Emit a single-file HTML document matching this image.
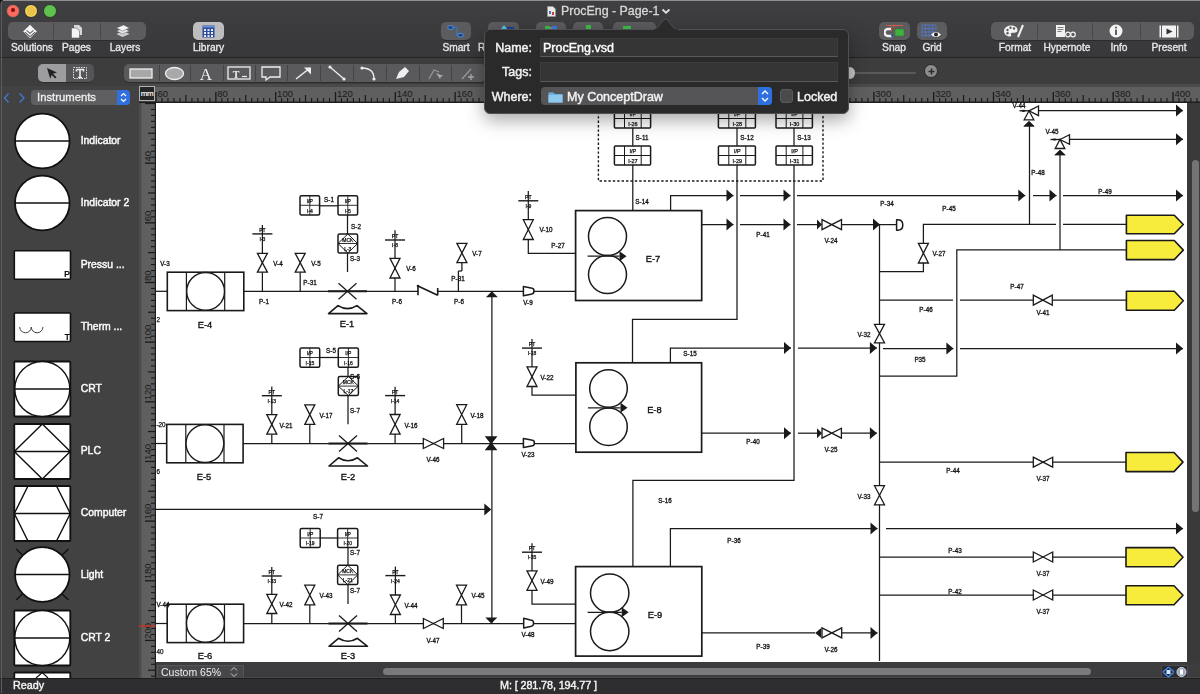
<!DOCTYPE html>
<html><head><meta charset="utf-8">
<style>
*{margin:0;padding:0;box-sizing:border-box}
html,body{width:1200px;height:694px;overflow:hidden;background:#3b3b3d;font-family:"Liberation Sans",sans-serif}
.a{position:absolute}
#top,#row2,#left,#status,#bottombar,.pop,.lib{will-change:transform}
#top{left:0;top:0;width:1200px;height:57px;background:linear-gradient(#3f3f41,#38383a);border-top:1px solid #8e8e90}
#row2{left:0;top:57px;width:1200px;height:29px;background:#3d3d3e;border-top:1px solid #232323}
.tl{width:12px;height:12px;border-radius:50%}
.grp{background:#5c5c5e;border-radius:5px;box-shadow:0 1px 0 rgba(0,0,0,.25)}
.lbl{color:#e6e6e6;font-size:10.2px;text-align:center;-webkit-text-stroke:0.35px #e6e6e6}
.sep{background:#48484a;width:1px}
#left{left:0;top:86px;width:139px;height:592px;background:#424242}
#rulerTop{left:139px;top:86px;width:1061px;height:17px;background:#5b5b5b}
#rulerLeft{left:139px;top:103px;width:17px;height:559px;background:#5b5b5b}
#canvas{left:156px;top:103px;width:1031px;height:559px;background:#fff}
#rightbar{left:1187px;top:103px;width:13px;height:559px;background:#3a3a3a}
#bottombar{left:156px;top:662px;width:1044px;height:16px;background:#3c3c3e}
#status{left:0;top:678px;width:1200px;height:16px;background:#2e2e30;border-top:1px solid #1e1e1e;color:#f4f4f4;font-size:10.8px;-webkit-text-stroke:0.4px #f4f4f4}
.pop{left:484px;top:29px;width:364.5px;height:85px;background:#2a2a2b;border-radius:6px;border:1px solid #505052;box-shadow:0 6px 18px rgba(0,0,0,.35)}
.field{background:#353536;border:1px solid #3c3c3d;border-bottom-color:#5a5a5a}
.plbl{color:#f2f2f2;font-size:12.5px;text-align:right;width:50px;-webkit-text-stroke:0.45px #f2f2f2}
.pop div{-webkit-text-stroke:0.45px currentColor}
</style></head><body>
<div id="top" class="a">
  <div class="a tl" style="left:6px;top:2.7px;width:14px;height:14px;background:#fc6a5e;border:1.5px solid #2e4848"><div class="a" style="left:3.5px;top:3.5px;width:4px;height:4px;border-radius:50%;background:#7a0e08"></div></div>
  <div class="a tl" style="left:24px;top:2.7px;width:14px;height:14px;background:#e8c24a;border:1.5px solid #232a48;box-shadow:inset 0 0 0 1.2px #fcd84a"></div>
  <div class="a tl" style="left:43px;top:2.7px;width:14px;height:14px;background:#5fc24f;border:1.5px solid #2a3a2a"></div>
  <!-- title -->
  <svg class="a" style="left:547px;top:5px" width="9" height="11"><path d="M0.5 0.5h5.5l2.5 2.5v7.5h-8z" fill="#e8e8e8" stroke="#999" stroke-width="0.6"/><rect x="2" y="5" width="2" height="3" fill="#3b6fd0"/><rect x="5" y="6" width="2" height="3" fill="#d04030"/></svg>
  <div class="a" style="left:561px;top:2.5px;font-size:12.4px;color:#d8d8d8;white-space:nowrap;-webkit-text-stroke:0.3px #d8d8d8">ProcEng - Page-1</div>
  <svg class="a" style="left:661px;top:6px" width="10" height="8"><path d="M1.5 2.5l3.5 3.2 3.5-3.2" fill="none" stroke="#e0e0e0" stroke-width="1.8"/></svg>
  <!-- left group -->
  <div class="a grp" style="left:8px;top:21px;width:138px;height:18px"></div>
  <div class="a sep" style="left:53px;top:22px;height:16px"></div>
  <div class="a sep" style="left:100px;top:22px;height:16px"></div>
  <svg class="a" style="left:22px;top:23px" width="16" height="15"><path d="M8 0.8l6.8 6.7-6.8 6.7-6.8-6.7z" fill="#f6f6f6"/><path d="M2.8 8.2l5.2 4.4 5.2-4.4M4.6 6.3l3.4 3 3.4-3" fill="none" stroke="#5e5e60" stroke-width="1.1"/></svg>
  <svg class="a" style="left:70px;top:23px" width="14" height="15"><path d="M4 1h5l3 3v7h-8z" fill="#d8d8d8"/><path d="M1.5 4h5l3 3v7h-8z" fill="#f4f4f4" stroke="#5c5c5e" stroke-width="0.6"/></svg>
  <svg class="a" style="left:115px;top:23px" width="16" height="15"><path d="M1.5 10l7-3 6 3-7 3z" fill="#d0d0d0"/><path d="M1.5 7l7-3 6 3-7 3z" fill="#e6e6e6" stroke="#5c5c5e" stroke-width="0.5"/><path d="M1.5 4l7-3 6 3-7 3z" fill="#f6f6f6" stroke="#5c5c5e" stroke-width="0.5"/></svg>
  <div class="a lbl" style="left:5px;top:41px;width:54px">Solutions</div>
  <div class="a lbl" style="left:53px;top:41px;width:47px">Pages</div>
  <div class="a lbl" style="left:100px;top:41px;width:50px">Layers</div>
  <!-- library -->
  <div class="a grp" style="left:193px;top:21px;width:31px;height:18px;background:#bdbdbf"></div>
  <svg class="a" style="left:202px;top:24px" width="13" height="13"><rect x="0.5" y="0.5" width="12" height="12" fill="#2a4c9a"/><rect x="0.5" y="0.5" width="12" height="2" fill="#6f8fd0"/><g fill="#e8ecf6"><rect x="2" y="4" width="2" height="2"/><rect x="5.5" y="4" width="2" height="2"/><rect x="9" y="4" width="2" height="2"/><rect x="2" y="7" width="2" height="2"/><rect x="5.5" y="7" width="2" height="2"/><rect x="9" y="7" width="2" height="2"/><rect x="2" y="10" width="2" height="2"/><rect x="5.5" y="10" width="2" height="2"/><rect x="9" y="10" width="2" height="2"/></g></svg>
  <div class="a lbl" style="left:183px;top:41px;width:51px">Library</div>
  <!-- smart etc -->
  <div class="a grp" style="left:441px;top:21px;width:30px;height:18px"></div>
  <svg class="a" style="left:447px;top:24px" width="18" height="13"><path d="M5 2.5h5v8h4" fill="none" stroke="#2f7ad8" stroke-width="1"/><rect x="1" y="0.8" width="5" height="3.5" rx="1" fill="#1e3f7a" stroke="#4aa0ff" stroke-width="0.8"/><rect x="11" y="8.5" width="5" height="3.5" rx="1" fill="#1e3f7a" stroke="#4aa0ff" stroke-width="0.8"/></svg>
  <div class="a lbl" style="left:431px;top:41px;width:50px">Smart</div>
  <div class="a lbl" style="left:478px;top:41px;width:12px;text-align:left">R</div>
  <div class="a grp" style="left:488px;top:21px;width:31px;height:18px"></div>
  <div class="a grp" style="left:536px;top:21px;width:30px;height:18px"></div>
  <div class="a grp" style="left:573px;top:21px;width:30px;height:18px"></div>
  <div class="a grp" style="left:613px;top:21px;width:43px;height:18px"></div>
  <svg class="a" style="left:488px;top:21px" width="170" height="9">
    <path d="M13 7l3-4 3 4z" fill="#4fc8e8"/><rect x="19" y="5" width="7" height="3" fill="#1e3f9a"/>
    <rect x="57" y="4" width="5" height="4" rx="1" fill="#3cc04a"/><rect x="64" y="4" width="5" height="4" rx="1" fill="#3a7ee8"/><path d="M62 6h2" stroke="#ccc" stroke-width="0.8"/>
    <rect x="98" y="3" width="5" height="5" rx="1" fill="#3cc04a"/>
    <rect x="135" y="4" width="8" height="4" rx="1" fill="#3cc04a"/>
  </svg>
  <!-- snap grid -->
  <div class="a grp" style="left:879px;top:21px;width:31px;height:18px"></div>
  <svg class="a" style="left:884px;top:23px" width="22" height="14"><path d="M2 1.5h17" stroke="#e06040" stroke-width="0.8"/><path d="M10 0.5v3" stroke="#e06040" stroke-width="0.8"/><path d="M8 5h-4a3 3 0 0 0 0 7h4" fill="none" stroke="#f0f0f0" stroke-width="2.5"/><rect x="7" y="4" width="2" height="2" fill="#d03030"/><rect x="7" y="10.5" width="2" height="2" fill="#3050d0"/><rect x="11" y="5" width="9" height="7" fill="#40b040" stroke="#2a7a2a" stroke-width="0.6"/></svg>
  <div class="a lbl" style="left:869px;top:41px;width:50px">Snap</div>
  <div class="a grp" style="left:917px;top:21px;width:30px;height:18px"></div>
  <svg class="a" style="left:921px;top:23px" width="22" height="15"><g stroke="#4f76c8" stroke-width="0.9" fill="none"><path d="M1 1h14M1 4.5h14M1 8h14M1 11.5h10M1 1v12M4.5 1v12M8 1v12M11.5 1v12M15 1v5"/></g><path d="M10 10.5q5-5 10 0q-5 5-10 0z" fill="#fff"/><circle cx="15" cy="10.5" r="2" fill="#222"/></svg>
  <div class="a lbl" style="left:907px;top:41px;width:50px">Grid</div>
  <!-- right group -->
  <div class="a grp" style="left:991px;top:21px;width:203px;height:18px"></div>
  <div class="a sep" style="left:1037px;top:22px;height:16px"></div>
  <div class="a sep" style="left:1092px;top:22px;height:16px"></div>
  <div class="a sep" style="left:1140px;top:22px;height:16px"></div>
  <svg class="a" style="left:1003px;top:23px" width="22" height="14"><path d="M8 1.5c-4 0-7 2.5-7 5.5 0 3 2.5 5.5 6 5.5 1.5 0 1.5-1.2 1-2-.6-1 .2-1.8 1.2-1.8h2c2 0 3.3-1 3.3-2.8 0-2.8-2.8-4.4-6.5-4.4z" fill="#f2f2f2"/><circle cx="4.5" cy="6" r="1.2" fill="#5c5c5e"/><circle cx="7.5" cy="3.8" r="1.2" fill="#5c5c5e"/><circle cx="11" cy="4.5" r="1.2" fill="#5c5c5e"/><circle cx="4.5" cy="9.3" r="1.2" fill="#5c5c5e"/><path d="M15 13l5-12" stroke="#f2f2f2" stroke-width="2"/></svg>
  <div class="a lbl" style="left:990px;top:41px;width:50px">Format</div>
  <svg class="a" style="left:1055px;top:23px" width="22" height="14"><path d="M1 1h9v12h-9z" fill="#f2f2f2"/><path d="M2.5 3.5h6M2.5 5.5h6M2.5 7.5h4" stroke="#5c5c5e" stroke-width="0.8"/><circle cx="13" cy="10.5" r="2.3" fill="none" stroke="#f2f2f2" stroke-width="1.2"/><circle cx="18" cy="10.5" r="2.3" fill="none" stroke="#f2f2f2" stroke-width="1.2"/></svg>
  <div class="a lbl" style="left:1037px;top:41px;width:60px">Hypernote</div>
  <svg class="a" style="left:1109px;top:23px" width="14" height="14"><circle cx="7" cy="7" r="6.5" fill="#f4f4f4"/><rect x="6" y="5.5" width="2" height="5.5" fill="#5c5c5e"/><circle cx="7" cy="3.5" r="1.1" fill="#5c5c5e"/></svg>
  <div class="a lbl" style="left:1094px;top:41px;width:50px">Info</div>
  <svg class="a" style="left:1159px;top:24px" width="20" height="13"><rect x="0.5" y="0.5" width="19" height="12" fill="#f2f2f2"/><path d="M2.5 0v13M17.5 0v13" stroke="#5c5c5e" stroke-width="1"/><path d="M7.5 3.5l6 3-6 3z" fill="#333"/></svg>
  <div class="a lbl" style="left:1144px;top:41px;width:50px">Present</div>
</div>
<div class="a" style="left:1px;top:1px;width:1px;height:692px;background:#5c5c5e;z-index:5"></div>
<div class="a" style="left:0;top:0;width:4px;height:4px;background:radial-gradient(circle at 4px 4px,transparent 3.5px,#111 4px);z-index:6"></div>
<div id="row2" class="a">
  <div class="a grp" style="left:38px;top:6px;width:56px;height:18px;background:#555557"></div>
  <div class="a" style="left:38px;top:6px;width:28px;height:18px;background:#9d9d9f;border-radius:5px 0 0 5px"></div>
  <svg class="a" style="left:45px;top:9px" width="14" height="12"><path d="M2 1l10 4.5-4 1.2 3.5 3.5-1.3 1.3-3.5-3.5-1.5 3.8z" fill="#222"/></svg>
  <svg class="a" style="left:72px;top:8px" width="16" height="14"><rect x="1.5" y="1.5" width="13" height="11" fill="none" stroke="#ddd" stroke-width="1" stroke-dasharray="1.5 1"/><path d="M4.5 3.5h7v2M8 3.5v8M6 11.5h4M4.5 3.5v2" fill="none" stroke="#eee" stroke-width="1.6"/></svg>
  <div class="a grp" style="left:124px;top:6px;width:362px;height:18px;background:#5a5a5c"></div>
  <div class="a sep" style="left:159px;top:7px;height:16px;background:#444"></div>
  <div class="a sep" style="left:190px;top:7px;height:16px;background:#444"></div>
  <div class="a sep" style="left:223px;top:7px;height:16px;background:#444"></div>
  <div class="a sep" style="left:255px;top:7px;height:16px;background:#444"></div>
  <div class="a sep" style="left:287px;top:7px;height:16px;background:#444"></div>
  <div class="a sep" style="left:320px;top:7px;height:16px;background:#444"></div>
  <div class="a sep" style="left:353px;top:7px;height:16px;background:#444"></div>
  <div class="a sep" style="left:386px;top:7px;height:16px;background:#444"></div>
  <div class="a sep" style="left:419px;top:7px;height:16px;background:#444"></div>
  <div class="a sep" style="left:451px;top:7px;height:16px;background:#444"></div>
  <svg class="a" style="left:124px;top:6px" width="362" height="18">
    <rect x="6" y="5" width="22" height="9" fill="#a8a8a8" stroke="#eee" stroke-width="1.3"/>
    <ellipse cx="50.5" cy="9.5" rx="9" ry="6" fill="#a8a8a8" stroke="#eee" stroke-width="1.3"/>
    <text x="82" y="15.5" font-family="Liberation Serif" font-size="17" fill="#f0f0f0" text-anchor="middle">A</text>
    <rect x="104" y="3" width="22" height="12" fill="none" stroke="#eee" stroke-width="1.3"/>
    <text x="112" y="13.5" font-family="Liberation Serif" font-weight="bold" font-size="10" fill="#f0f0f0" text-anchor="middle">T</text>
    <path d="M118 12.5h5" stroke="#eee" stroke-width="1.2"/>
    <path d="M138 3h18v10h-10l-4 3v-3h-4z" fill="none" stroke="#eee" stroke-width="1.3"/>
    <path d="M172 15l14-11" stroke="#eee" stroke-width="1.5"/><path d="M180 3.5h7v7z" fill="#eee"/>
    <path d="M206 3l14 12" stroke="#eee" stroke-width="1.3"/><circle cx="206" cy="3" r="1.6" fill="#eee"/><circle cx="220" cy="15" r="1.6" fill="#eee"/>
    <path d="M238 4q12 0 12 11" fill="none" stroke="#eee" stroke-width="1.3"/><circle cx="238" cy="4" r="1.6" fill="#eee"/><circle cx="250" cy="15" r="1.6" fill="#eee"/>
    <path d="M272 15l3-7 6-5 4 4-5 6z" fill="#eee"/>
    <path d="M305 15l5-9 5 2" fill="none" stroke="#999" stroke-width="1.2"/><path d="M312 9l4 6 1-2.5 2.5-.5z" fill="#aaa"/>
    <path d="M338 15l9-10" stroke="#999" stroke-width="1.2"/><path d="M347 10v6M344 13h6" stroke="#aaa" stroke-width="1.3"/>
  </svg>
  <!-- slider -->
  <div class="a" style="left:850px;top:14px;width:66px;height:2px;background:#5a5a5a;border-radius:1px"></div>
  <div class="a" style="left:845px;top:9px;width:10px;height:12px;border-radius:50%;background:#c8c8c8"></div>
  <div class="a" style="left:924px;top:6px;width:14px;height:14px;border-radius:50%;background:#8c8c8c;border:1px solid #2a2a2a"></div>
  <svg class="a" style="left:924.5px;top:6.5px" width="13" height="13"><path d="M6.5 3.5v6M3.5 6.5h6" stroke="#2a2a2a" stroke-width="1.5"/></svg>
</div>
<div id="left" class="a"><div class="a" style="left:1px;top:0;width:1px;height:592px;background:#4e4e50"></div>
  <svg class="a" style="left:2px;top:6px" width="26" height="12"><path d="M6.5 1.5l-4 4.5 4 4.5M17.5 1.5l4.5 4.5-4.5 4.5" fill="none" stroke="#3e7bd4" stroke-width="1.3"/></svg>
  <div class="a" style="left:31px;top:4px;width:99px;height:15px;background:#5f5f61;border-radius:4px"></div>
  <div class="a" style="left:37px;top:4px;font-size:11.3px;color:#f0f0f0;line-height:15px;-webkit-text-stroke:0.3px #f0f0f0">Instruments</div>
  <div class="a" style="left:117px;top:4px;width:13px;height:15px;background:#2f6fe0;border-radius:0 4px 4px 0"></div>
  <svg class="a" style="left:117px;top:4px" width="13" height="15"><path d="M4 6l2.5-2.5 2.5 2.5M4 9l2.5 2.5 2.5-2.5" fill="none" stroke="#fff" stroke-width="1.2"/></svg>
</div>
<!--LIB-->
<svg class="a lib" style="left:0;top:0" width="139" height="678" font-family="Liberation Sans"><circle cx="42.3" cy="141" r="27.3" fill="#fff" stroke="#111" stroke-width="1.8"/>
<path d="M14.999999999999996,141 H69.6" stroke="#111" stroke-width="1.6"/>
<text x="80.7" y="144" font-size="10.4" fill="#fafafa" stroke="#fafafa" stroke-width="0.45">Indicator</text>
<circle cx="42.3" cy="203" r="27.3" fill="#fff" stroke="#111" stroke-width="1.8"/>
<path d="M14.999999999999996,203 H69.6" stroke="#111" stroke-width="1.6"/>
<text x="80.7" y="206" font-size="10.4" fill="#fafafa" stroke="#fafafa" stroke-width="0.45">Indicator 2</text>
<rect x="14.3" y="250.8" width="56.2" height="28.5" fill="#fff" stroke="#111" stroke-width="1.6" rx="1"/>
<text x="64" y="277" font-size="9" font-weight="bold" fill="#111">P</text>
<text x="80.7" y="268" font-size="10.4" fill="#fafafa" stroke="#fafafa" stroke-width="0.45">Pressu ...</text>
<rect x="14.3" y="313" width="56.2" height="28.5" fill="#fff" stroke="#111" stroke-width="1.6" rx="1"/>
<text x="64.5" y="339.5" font-size="9" font-weight="bold" fill="#111">T</text>
<text x="80.7" y="330" font-size="10.4" fill="#fafafa" stroke="#fafafa" stroke-width="0.45">Therm ...</text>
<path d="M19.7,327 A5.8,5.8 0 0 0 31.3,327 A5.8,5.8 0 0 0 42.9,327" fill="none" stroke="#444" stroke-width="1"/>
<rect x="14.3" y="361.5" width="56" height="55" fill="#fff" stroke="#111" stroke-width="1.8" rx="1"/>
<circle cx="42.3" cy="389" r="27.5" fill="#fff" stroke="#111" stroke-width="1.4"/>
<path d="M14.3,389 H70.3" stroke="#111" stroke-width="1.4"/>
<text x="80.7" y="392" font-size="10.4" fill="#fafafa" stroke="#fafafa" stroke-width="0.45">CRT</text>
<rect x="14.3" y="424" width="56" height="55" fill="#fff" stroke="#111" stroke-width="1.8" rx="1"/>
<path d="M42.3,424 L70.3,451.5 L42.3,479 L14.3,451.5 Z M14.3,451.5 H70.3" fill="none" stroke="#111" stroke-width="1.4"/>
<text x="80.7" y="454" font-size="10.4" fill="#fafafa" stroke="#fafafa" stroke-width="0.45">PLC</text>
<rect x="14.3" y="486" width="56" height="55" fill="#fff" stroke="#111" stroke-width="1.8" rx="1"/>
<path d="M28,486 L56.5,486 L70.3,513.5 L56.5,541 L28,541 L14.3,513.5 Z M14.3,513.5 H70.3" fill="none" stroke="#111" stroke-width="1.4"/>
<text x="80.7" y="516" font-size="10.4" fill="#fafafa" stroke="#fafafa" stroke-width="0.45">Computer</text>
<circle cx="42.3" cy="574.5" r="27.3" fill="#fff" stroke="#111" stroke-width="1.8"/>
<path d="M14.999999999999996,574.5 H69.6" stroke="#111" stroke-width="1.4"/>
<path d="M16,549 L22.5,555 M68.5,549 L62,555 M16,600 L22.5,594 M68.5,600 L62,594" stroke="#111" stroke-width="1.4"/>
<text x="80.7" y="577.5" font-size="10.4" fill="#fafafa" stroke="#fafafa" stroke-width="0.45">Light</text>
<rect x="14.3" y="610.5" width="56" height="55" fill="#fff" stroke="#111" stroke-width="1.8" rx="1"/>
<circle cx="42.3" cy="638" r="27.5" fill="#fff" stroke="#111" stroke-width="1.4"/>
<path d="M14.3,638 H70.3" stroke="#111" stroke-width="1.4"/>
<text x="80.7" y="641" font-size="10.4" fill="#fafafa" stroke="#fafafa" stroke-width="0.45">CRT 2</text>
<rect x="14.3" y="672.5" width="56" height="20" fill="#fff" stroke="#111" stroke-width="1.8" rx="1"/>
<path d="M36,678 L42.3,672.5 L48,678" fill="none" stroke="#111" stroke-width="1.2"/></svg>
<!--/LIB-->
<!--RULER-->
<svg class="a" style="left:0;top:84px" width="1200" height="19">
<rect x="139" y="0" width="1061" height="19" fill="#5f5f5f"/>
<rect x="139" y="0" width="1061" height="3" fill="#4a4a4a"/>
<rect x="139" y="17.5" width="1061" height="1.5" fill="#1e1e1e"/>
<rect x="155.38" y="8" width="1.3" height="10" fill="#1a1a1a"/>
<text x="157.48" y="12.8" font-size="9.5" fill="#1a1a1a" font-family="Liberation Sans">60</text>
<rect x="161.46" y="14" width="1.1" height="4" fill="#1a1a1a"/>
<rect x="167.44" y="14" width="1.1" height="4" fill="#1a1a1a"/>
<rect x="173.43" y="14" width="1.1" height="4" fill="#1a1a1a"/>
<rect x="179.41" y="14" width="1.1" height="4" fill="#1a1a1a"/>
<rect x="185.29" y="11" width="1.2" height="7" fill="#1a1a1a"/>
<rect x="191.37" y="14" width="1.1" height="4" fill="#1a1a1a"/>
<rect x="197.35" y="14" width="1.1" height="4" fill="#1a1a1a"/>
<rect x="203.34" y="14" width="1.1" height="4" fill="#1a1a1a"/>
<rect x="209.32" y="14" width="1.1" height="4" fill="#1a1a1a"/>
<rect x="215.20" y="8" width="1.3" height="10" fill="#1a1a1a"/>
<text x="217.30" y="12.8" font-size="9.5" fill="#1a1a1a" font-family="Liberation Sans">80</text>
<rect x="221.28" y="14" width="1.1" height="4" fill="#1a1a1a"/>
<rect x="227.26" y="14" width="1.1" height="4" fill="#1a1a1a"/>
<rect x="233.25" y="14" width="1.1" height="4" fill="#1a1a1a"/>
<rect x="239.23" y="14" width="1.1" height="4" fill="#1a1a1a"/>
<rect x="245.11" y="11" width="1.2" height="7" fill="#1a1a1a"/>
<rect x="251.19" y="14" width="1.1" height="4" fill="#1a1a1a"/>
<rect x="257.17" y="14" width="1.1" height="4" fill="#1a1a1a"/>
<rect x="263.16" y="14" width="1.1" height="4" fill="#1a1a1a"/>
<rect x="269.14" y="14" width="1.1" height="4" fill="#1a1a1a"/>
<rect x="275.02" y="8" width="1.3" height="10" fill="#1a1a1a"/>
<text x="277.12" y="12.8" font-size="9.5" fill="#1a1a1a" font-family="Liberation Sans">100</text>
<rect x="281.10" y="14" width="1.1" height="4" fill="#1a1a1a"/>
<rect x="287.08" y="14" width="1.1" height="4" fill="#1a1a1a"/>
<rect x="293.07" y="14" width="1.1" height="4" fill="#1a1a1a"/>
<rect x="299.05" y="14" width="1.1" height="4" fill="#1a1a1a"/>
<rect x="304.93" y="11" width="1.2" height="7" fill="#1a1a1a"/>
<rect x="311.01" y="14" width="1.1" height="4" fill="#1a1a1a"/>
<rect x="316.99" y="14" width="1.1" height="4" fill="#1a1a1a"/>
<rect x="322.98" y="14" width="1.1" height="4" fill="#1a1a1a"/>
<rect x="328.96" y="14" width="1.1" height="4" fill="#1a1a1a"/>
<rect x="334.84" y="8" width="1.3" height="10" fill="#1a1a1a"/>
<text x="336.94" y="12.8" font-size="9.5" fill="#1a1a1a" font-family="Liberation Sans">120</text>
<rect x="340.92" y="14" width="1.1" height="4" fill="#1a1a1a"/>
<rect x="346.90" y="14" width="1.1" height="4" fill="#1a1a1a"/>
<rect x="352.89" y="14" width="1.1" height="4" fill="#1a1a1a"/>
<rect x="358.87" y="14" width="1.1" height="4" fill="#1a1a1a"/>
<rect x="364.75" y="11" width="1.2" height="7" fill="#1a1a1a"/>
<rect x="370.83" y="14" width="1.1" height="4" fill="#1a1a1a"/>
<rect x="376.81" y="14" width="1.1" height="4" fill="#1a1a1a"/>
<rect x="382.80" y="14" width="1.1" height="4" fill="#1a1a1a"/>
<rect x="388.78" y="14" width="1.1" height="4" fill="#1a1a1a"/>
<rect x="394.66" y="8" width="1.3" height="10" fill="#1a1a1a"/>
<text x="396.76" y="12.8" font-size="9.5" fill="#1a1a1a" font-family="Liberation Sans">140</text>
<rect x="400.74" y="14" width="1.1" height="4" fill="#1a1a1a"/>
<rect x="406.72" y="14" width="1.1" height="4" fill="#1a1a1a"/>
<rect x="412.71" y="14" width="1.1" height="4" fill="#1a1a1a"/>
<rect x="418.69" y="14" width="1.1" height="4" fill="#1a1a1a"/>
<rect x="424.57" y="11" width="1.2" height="7" fill="#1a1a1a"/>
<rect x="430.65" y="14" width="1.1" height="4" fill="#1a1a1a"/>
<rect x="436.63" y="14" width="1.1" height="4" fill="#1a1a1a"/>
<rect x="442.62" y="14" width="1.1" height="4" fill="#1a1a1a"/>
<rect x="448.60" y="14" width="1.1" height="4" fill="#1a1a1a"/>
<rect x="454.48" y="8" width="1.3" height="10" fill="#1a1a1a"/>
<text x="456.58" y="12.8" font-size="9.5" fill="#1a1a1a" font-family="Liberation Sans">160</text>
<rect x="460.56" y="14" width="1.1" height="4" fill="#1a1a1a"/>
<rect x="466.54" y="14" width="1.1" height="4" fill="#1a1a1a"/>
<rect x="472.53" y="14" width="1.1" height="4" fill="#1a1a1a"/>
<rect x="478.51" y="14" width="1.1" height="4" fill="#1a1a1a"/>
<rect x="484.39" y="11" width="1.2" height="7" fill="#1a1a1a"/>
<rect x="490.47" y="14" width="1.1" height="4" fill="#1a1a1a"/>
<rect x="496.45" y="14" width="1.1" height="4" fill="#1a1a1a"/>
<rect x="502.44" y="14" width="1.1" height="4" fill="#1a1a1a"/>
<rect x="508.42" y="14" width="1.1" height="4" fill="#1a1a1a"/>
<rect x="514.30" y="8" width="1.3" height="10" fill="#1a1a1a"/>
<text x="516.40" y="12.8" font-size="9.5" fill="#1a1a1a" font-family="Liberation Sans">180</text>
<rect x="520.38" y="14" width="1.1" height="4" fill="#1a1a1a"/>
<rect x="526.36" y="14" width="1.1" height="4" fill="#1a1a1a"/>
<rect x="532.35" y="14" width="1.1" height="4" fill="#1a1a1a"/>
<rect x="538.33" y="14" width="1.1" height="4" fill="#1a1a1a"/>
<rect x="544.21" y="11" width="1.2" height="7" fill="#1a1a1a"/>
<rect x="550.29" y="14" width="1.1" height="4" fill="#1a1a1a"/>
<rect x="556.27" y="14" width="1.1" height="4" fill="#1a1a1a"/>
<rect x="562.26" y="14" width="1.1" height="4" fill="#1a1a1a"/>
<rect x="568.24" y="14" width="1.1" height="4" fill="#1a1a1a"/>
<rect x="574.12" y="8" width="1.3" height="10" fill="#1a1a1a"/>
<text x="576.22" y="12.8" font-size="9.5" fill="#1a1a1a" font-family="Liberation Sans">200</text>
<rect x="580.20" y="14" width="1.1" height="4" fill="#1a1a1a"/>
<rect x="586.18" y="14" width="1.1" height="4" fill="#1a1a1a"/>
<rect x="592.17" y="14" width="1.1" height="4" fill="#1a1a1a"/>
<rect x="598.15" y="14" width="1.1" height="4" fill="#1a1a1a"/>
<rect x="604.03" y="11" width="1.2" height="7" fill="#1a1a1a"/>
<rect x="610.11" y="14" width="1.1" height="4" fill="#1a1a1a"/>
<rect x="616.09" y="14" width="1.1" height="4" fill="#1a1a1a"/>
<rect x="622.08" y="14" width="1.1" height="4" fill="#1a1a1a"/>
<rect x="628.06" y="14" width="1.1" height="4" fill="#1a1a1a"/>
<rect x="633.94" y="8" width="1.3" height="10" fill="#1a1a1a"/>
<text x="636.04" y="12.8" font-size="9.5" fill="#1a1a1a" font-family="Liberation Sans">220</text>
<rect x="640.02" y="14" width="1.1" height="4" fill="#1a1a1a"/>
<rect x="646.00" y="14" width="1.1" height="4" fill="#1a1a1a"/>
<rect x="651.99" y="14" width="1.1" height="4" fill="#1a1a1a"/>
<rect x="657.97" y="14" width="1.1" height="4" fill="#1a1a1a"/>
<rect x="663.85" y="11" width="1.2" height="7" fill="#1a1a1a"/>
<rect x="669.93" y="14" width="1.1" height="4" fill="#1a1a1a"/>
<rect x="675.91" y="14" width="1.1" height="4" fill="#1a1a1a"/>
<rect x="681.90" y="14" width="1.1" height="4" fill="#1a1a1a"/>
<rect x="687.88" y="14" width="1.1" height="4" fill="#1a1a1a"/>
<rect x="693.76" y="8" width="1.3" height="10" fill="#1a1a1a"/>
<text x="695.86" y="12.8" font-size="9.5" fill="#1a1a1a" font-family="Liberation Sans">240</text>
<rect x="699.84" y="14" width="1.1" height="4" fill="#1a1a1a"/>
<rect x="705.82" y="14" width="1.1" height="4" fill="#1a1a1a"/>
<rect x="711.81" y="14" width="1.1" height="4" fill="#1a1a1a"/>
<rect x="717.79" y="14" width="1.1" height="4" fill="#1a1a1a"/>
<rect x="723.67" y="11" width="1.2" height="7" fill="#1a1a1a"/>
<rect x="729.75" y="14" width="1.1" height="4" fill="#1a1a1a"/>
<rect x="735.73" y="14" width="1.1" height="4" fill="#1a1a1a"/>
<rect x="741.72" y="14" width="1.1" height="4" fill="#1a1a1a"/>
<rect x="747.70" y="14" width="1.1" height="4" fill="#1a1a1a"/>
<rect x="753.58" y="8" width="1.3" height="10" fill="#1a1a1a"/>
<text x="755.68" y="12.8" font-size="9.5" fill="#1a1a1a" font-family="Liberation Sans">260</text>
<rect x="759.66" y="14" width="1.1" height="4" fill="#1a1a1a"/>
<rect x="765.64" y="14" width="1.1" height="4" fill="#1a1a1a"/>
<rect x="771.63" y="14" width="1.1" height="4" fill="#1a1a1a"/>
<rect x="777.61" y="14" width="1.1" height="4" fill="#1a1a1a"/>
<rect x="783.49" y="11" width="1.2" height="7" fill="#1a1a1a"/>
<rect x="789.57" y="14" width="1.1" height="4" fill="#1a1a1a"/>
<rect x="795.55" y="14" width="1.1" height="4" fill="#1a1a1a"/>
<rect x="801.54" y="14" width="1.1" height="4" fill="#1a1a1a"/>
<rect x="807.52" y="14" width="1.1" height="4" fill="#1a1a1a"/>
<rect x="813.40" y="8" width="1.3" height="10" fill="#1a1a1a"/>
<text x="815.50" y="12.8" font-size="9.5" fill="#1a1a1a" font-family="Liberation Sans">280</text>
<rect x="819.48" y="14" width="1.1" height="4" fill="#1a1a1a"/>
<rect x="825.46" y="14" width="1.1" height="4" fill="#1a1a1a"/>
<rect x="831.45" y="14" width="1.1" height="4" fill="#1a1a1a"/>
<rect x="837.43" y="14" width="1.1" height="4" fill="#1a1a1a"/>
<rect x="843.31" y="11" width="1.2" height="7" fill="#1a1a1a"/>
<rect x="849.39" y="14" width="1.1" height="4" fill="#1a1a1a"/>
<rect x="855.37" y="14" width="1.1" height="4" fill="#1a1a1a"/>
<rect x="861.36" y="14" width="1.1" height="4" fill="#1a1a1a"/>
<rect x="867.34" y="14" width="1.1" height="4" fill="#1a1a1a"/>
<rect x="873.22" y="8" width="1.3" height="10" fill="#1a1a1a"/>
<text x="875.32" y="12.8" font-size="9.5" fill="#1a1a1a" font-family="Liberation Sans">300</text>
<rect x="879.30" y="14" width="1.1" height="4" fill="#1a1a1a"/>
<rect x="885.28" y="14" width="1.1" height="4" fill="#1a1a1a"/>
<rect x="891.27" y="14" width="1.1" height="4" fill="#1a1a1a"/>
<rect x="897.25" y="14" width="1.1" height="4" fill="#1a1a1a"/>
<rect x="903.13" y="11" width="1.2" height="7" fill="#1a1a1a"/>
<rect x="909.21" y="14" width="1.1" height="4" fill="#1a1a1a"/>
<rect x="915.19" y="14" width="1.1" height="4" fill="#1a1a1a"/>
<rect x="921.18" y="14" width="1.1" height="4" fill="#1a1a1a"/>
<rect x="927.16" y="14" width="1.1" height="4" fill="#1a1a1a"/>
<rect x="933.04" y="8" width="1.3" height="10" fill="#1a1a1a"/>
<text x="935.14" y="12.8" font-size="9.5" fill="#1a1a1a" font-family="Liberation Sans">320</text>
<rect x="939.12" y="14" width="1.1" height="4" fill="#1a1a1a"/>
<rect x="945.10" y="14" width="1.1" height="4" fill="#1a1a1a"/>
<rect x="951.09" y="14" width="1.1" height="4" fill="#1a1a1a"/>
<rect x="957.07" y="14" width="1.1" height="4" fill="#1a1a1a"/>
<rect x="962.95" y="11" width="1.2" height="7" fill="#1a1a1a"/>
<rect x="969.03" y="14" width="1.1" height="4" fill="#1a1a1a"/>
<rect x="975.01" y="14" width="1.1" height="4" fill="#1a1a1a"/>
<rect x="981.00" y="14" width="1.1" height="4" fill="#1a1a1a"/>
<rect x="986.98" y="14" width="1.1" height="4" fill="#1a1a1a"/>
<rect x="992.86" y="8" width="1.3" height="10" fill="#1a1a1a"/>
<text x="994.96" y="12.8" font-size="9.5" fill="#1a1a1a" font-family="Liberation Sans">340</text>
<rect x="998.94" y="14" width="1.1" height="4" fill="#1a1a1a"/>
<rect x="1004.92" y="14" width="1.1" height="4" fill="#1a1a1a"/>
<rect x="1010.91" y="14" width="1.1" height="4" fill="#1a1a1a"/>
<rect x="1016.89" y="14" width="1.1" height="4" fill="#1a1a1a"/>
<rect x="1022.77" y="11" width="1.2" height="7" fill="#1a1a1a"/>
<rect x="1028.85" y="14" width="1.1" height="4" fill="#1a1a1a"/>
<rect x="1034.83" y="14" width="1.1" height="4" fill="#1a1a1a"/>
<rect x="1040.82" y="14" width="1.1" height="4" fill="#1a1a1a"/>
<rect x="1046.80" y="14" width="1.1" height="4" fill="#1a1a1a"/>
<rect x="1052.68" y="8" width="1.3" height="10" fill="#1a1a1a"/>
<text x="1054.78" y="12.8" font-size="9.5" fill="#1a1a1a" font-family="Liberation Sans">360</text>
<rect x="1058.76" y="14" width="1.1" height="4" fill="#1a1a1a"/>
<rect x="1064.74" y="14" width="1.1" height="4" fill="#1a1a1a"/>
<rect x="1070.73" y="14" width="1.1" height="4" fill="#1a1a1a"/>
<rect x="1076.71" y="14" width="1.1" height="4" fill="#1a1a1a"/>
<rect x="1082.59" y="11" width="1.2" height="7" fill="#1a1a1a"/>
<rect x="1088.67" y="14" width="1.1" height="4" fill="#1a1a1a"/>
<rect x="1094.65" y="14" width="1.1" height="4" fill="#1a1a1a"/>
<rect x="1100.64" y="14" width="1.1" height="4" fill="#1a1a1a"/>
<rect x="1106.62" y="14" width="1.1" height="4" fill="#1a1a1a"/>
<rect x="1112.50" y="8" width="1.3" height="10" fill="#1a1a1a"/>
<text x="1114.60" y="12.8" font-size="9.5" fill="#1a1a1a" font-family="Liberation Sans">380</text>
<rect x="1118.58" y="14" width="1.1" height="4" fill="#1a1a1a"/>
<rect x="1124.56" y="14" width="1.1" height="4" fill="#1a1a1a"/>
<rect x="1130.55" y="14" width="1.1" height="4" fill="#1a1a1a"/>
<rect x="1136.53" y="14" width="1.1" height="4" fill="#1a1a1a"/>
<rect x="1142.41" y="11" width="1.2" height="7" fill="#1a1a1a"/>
<rect x="1148.49" y="14" width="1.1" height="4" fill="#1a1a1a"/>
<rect x="1154.47" y="14" width="1.1" height="4" fill="#1a1a1a"/>
<rect x="1160.46" y="14" width="1.1" height="4" fill="#1a1a1a"/>
<rect x="1166.44" y="14" width="1.1" height="4" fill="#1a1a1a"/>
<rect x="1172.32" y="8" width="1.3" height="10" fill="#1a1a1a"/>
<text x="1174.42" y="12.8" font-size="9.5" fill="#1a1a1a" font-family="Liberation Sans">400</text>
<rect x="1178.40" y="14" width="1.1" height="4" fill="#1a1a1a"/>
<rect x="1184.38" y="14" width="1.1" height="4" fill="#1a1a1a"/>
<rect x="1190.37" y="14" width="1.1" height="4" fill="#1a1a1a"/>
<rect x="1196.35" y="14" width="1.1" height="4" fill="#1a1a1a"/>
</svg>
<svg class="a" style="left:139px;top:103px" width="17" height="575">
<rect x="0" y="0" width="17" height="575" fill="#5f5f5f"/>
<rect x="0" y="0" width="2.5" height="575" fill="#4c4c4c"/>
<rect x="15.8" y="0" width="1.2" height="575" fill="#1e1e1e"/>
<rect x="6" y="-0.16" width="10" height="1.3" fill="#1a1a1a"/>
<text transform="translate(11.5 -1.06) rotate(-90)" font-size="9.5" fill="#1a1a1a" font-family="Liberation Sans">20</text>
<rect x="12" y="5.91" width="4" height="1.1" fill="#1a1a1a"/>
<rect x="12" y="11.87" width="4" height="1.1" fill="#1a1a1a"/>
<rect x="12" y="17.84" width="4" height="1.1" fill="#1a1a1a"/>
<rect x="12" y="23.80" width="4" height="1.1" fill="#1a1a1a"/>
<rect x="9" y="29.67" width="7" height="1.2" fill="#1a1a1a"/>
<rect x="12" y="35.74" width="4" height="1.1" fill="#1a1a1a"/>
<rect x="12" y="41.70" width="4" height="1.1" fill="#1a1a1a"/>
<rect x="12" y="47.67" width="4" height="1.1" fill="#1a1a1a"/>
<rect x="12" y="53.63" width="4" height="1.1" fill="#1a1a1a"/>
<rect x="6" y="59.50" width="10" height="1.3" fill="#1a1a1a"/>
<text transform="translate(11.5 58.60) rotate(-90)" font-size="9.5" fill="#1a1a1a" font-family="Liberation Sans">40</text>
<rect x="12" y="65.57" width="4" height="1.1" fill="#1a1a1a"/>
<rect x="12" y="71.53" width="4" height="1.1" fill="#1a1a1a"/>
<rect x="12" y="77.50" width="4" height="1.1" fill="#1a1a1a"/>
<rect x="12" y="83.46" width="4" height="1.1" fill="#1a1a1a"/>
<rect x="9" y="89.33" width="7" height="1.2" fill="#1a1a1a"/>
<rect x="12" y="95.40" width="4" height="1.1" fill="#1a1a1a"/>
<rect x="12" y="101.36" width="4" height="1.1" fill="#1a1a1a"/>
<rect x="12" y="107.33" width="4" height="1.1" fill="#1a1a1a"/>
<rect x="12" y="113.29" width="4" height="1.1" fill="#1a1a1a"/>
<rect x="6" y="119.16" width="10" height="1.3" fill="#1a1a1a"/>
<text transform="translate(11.5 118.26) rotate(-90)" font-size="9.5" fill="#1a1a1a" font-family="Liberation Sans">60</text>
<rect x="12" y="125.23" width="4" height="1.1" fill="#1a1a1a"/>
<rect x="12" y="131.19" width="4" height="1.1" fill="#1a1a1a"/>
<rect x="12" y="137.16" width="4" height="1.1" fill="#1a1a1a"/>
<rect x="12" y="143.12" width="4" height="1.1" fill="#1a1a1a"/>
<rect x="9" y="148.99" width="7" height="1.2" fill="#1a1a1a"/>
<rect x="12" y="155.06" width="4" height="1.1" fill="#1a1a1a"/>
<rect x="12" y="161.02" width="4" height="1.1" fill="#1a1a1a"/>
<rect x="12" y="166.99" width="4" height="1.1" fill="#1a1a1a"/>
<rect x="12" y="172.95" width="4" height="1.1" fill="#1a1a1a"/>
<rect x="6" y="178.82" width="10" height="1.3" fill="#1a1a1a"/>
<text transform="translate(11.5 177.92) rotate(-90)" font-size="9.5" fill="#1a1a1a" font-family="Liberation Sans">80</text>
<rect x="12" y="184.89" width="4" height="1.1" fill="#1a1a1a"/>
<rect x="12" y="190.85" width="4" height="1.1" fill="#1a1a1a"/>
<rect x="12" y="196.82" width="4" height="1.1" fill="#1a1a1a"/>
<rect x="12" y="202.78" width="4" height="1.1" fill="#1a1a1a"/>
<rect x="9" y="208.65" width="7" height="1.2" fill="#1a1a1a"/>
<rect x="12" y="214.72" width="4" height="1.1" fill="#1a1a1a"/>
<rect x="12" y="220.68" width="4" height="1.1" fill="#1a1a1a"/>
<rect x="12" y="226.65" width="4" height="1.1" fill="#1a1a1a"/>
<rect x="12" y="232.61" width="4" height="1.1" fill="#1a1a1a"/>
<rect x="6" y="238.48" width="10" height="1.3" fill="#1a1a1a"/>
<text transform="translate(11.5 237.58) rotate(-90)" font-size="9.5" fill="#1a1a1a" font-family="Liberation Sans">100</text>
<rect x="12" y="244.55" width="4" height="1.1" fill="#1a1a1a"/>
<rect x="12" y="250.51" width="4" height="1.1" fill="#1a1a1a"/>
<rect x="12" y="256.48" width="4" height="1.1" fill="#1a1a1a"/>
<rect x="12" y="262.44" width="4" height="1.1" fill="#1a1a1a"/>
<rect x="9" y="268.31" width="7" height="1.2" fill="#1a1a1a"/>
<rect x="12" y="274.38" width="4" height="1.1" fill="#1a1a1a"/>
<rect x="12" y="280.34" width="4" height="1.1" fill="#1a1a1a"/>
<rect x="12" y="286.31" width="4" height="1.1" fill="#1a1a1a"/>
<rect x="12" y="292.27" width="4" height="1.1" fill="#1a1a1a"/>
<rect x="6" y="298.14" width="10" height="1.3" fill="#1a1a1a"/>
<text transform="translate(11.5 297.24) rotate(-90)" font-size="9.5" fill="#1a1a1a" font-family="Liberation Sans">120</text>
<rect x="12" y="304.21" width="4" height="1.1" fill="#1a1a1a"/>
<rect x="12" y="310.17" width="4" height="1.1" fill="#1a1a1a"/>
<rect x="12" y="316.14" width="4" height="1.1" fill="#1a1a1a"/>
<rect x="12" y="322.10" width="4" height="1.1" fill="#1a1a1a"/>
<rect x="9" y="327.97" width="7" height="1.2" fill="#1a1a1a"/>
<rect x="12" y="334.04" width="4" height="1.1" fill="#1a1a1a"/>
<rect x="12" y="340.00" width="4" height="1.1" fill="#1a1a1a"/>
<rect x="12" y="345.97" width="4" height="1.1" fill="#1a1a1a"/>
<rect x="12" y="351.93" width="4" height="1.1" fill="#1a1a1a"/>
<rect x="6" y="357.80" width="10" height="1.3" fill="#1a1a1a"/>
<text transform="translate(11.5 356.90) rotate(-90)" font-size="9.5" fill="#1a1a1a" font-family="Liberation Sans">140</text>
<rect x="12" y="363.87" width="4" height="1.1" fill="#1a1a1a"/>
<rect x="12" y="369.83" width="4" height="1.1" fill="#1a1a1a"/>
<rect x="12" y="375.80" width="4" height="1.1" fill="#1a1a1a"/>
<rect x="12" y="381.76" width="4" height="1.1" fill="#1a1a1a"/>
<rect x="9" y="387.63" width="7" height="1.2" fill="#1a1a1a"/>
<rect x="12" y="393.70" width="4" height="1.1" fill="#1a1a1a"/>
<rect x="12" y="399.66" width="4" height="1.1" fill="#1a1a1a"/>
<rect x="12" y="405.63" width="4" height="1.1" fill="#1a1a1a"/>
<rect x="12" y="411.59" width="4" height="1.1" fill="#1a1a1a"/>
<rect x="6" y="417.46" width="10" height="1.3" fill="#1a1a1a"/>
<text transform="translate(11.5 416.56) rotate(-90)" font-size="9.5" fill="#1a1a1a" font-family="Liberation Sans">160</text>
<rect x="12" y="423.53" width="4" height="1.1" fill="#1a1a1a"/>
<rect x="12" y="429.49" width="4" height="1.1" fill="#1a1a1a"/>
<rect x="12" y="435.46" width="4" height="1.1" fill="#1a1a1a"/>
<rect x="12" y="441.42" width="4" height="1.1" fill="#1a1a1a"/>
<rect x="9" y="447.29" width="7" height="1.2" fill="#1a1a1a"/>
<rect x="12" y="453.36" width="4" height="1.1" fill="#1a1a1a"/>
<rect x="12" y="459.32" width="4" height="1.1" fill="#1a1a1a"/>
<rect x="12" y="465.29" width="4" height="1.1" fill="#1a1a1a"/>
<rect x="12" y="471.25" width="4" height="1.1" fill="#1a1a1a"/>
<rect x="6" y="477.12" width="10" height="1.3" fill="#1a1a1a"/>
<text transform="translate(11.5 476.22) rotate(-90)" font-size="9.5" fill="#1a1a1a" font-family="Liberation Sans">180</text>
<rect x="12" y="483.19" width="4" height="1.1" fill="#1a1a1a"/>
<rect x="12" y="489.15" width="4" height="1.1" fill="#1a1a1a"/>
<rect x="12" y="495.12" width="4" height="1.1" fill="#1a1a1a"/>
<rect x="12" y="501.08" width="4" height="1.1" fill="#1a1a1a"/>
<rect x="9" y="506.95" width="7" height="1.2" fill="#1a1a1a"/>
<rect x="12" y="513.02" width="4" height="1.1" fill="#1a1a1a"/>
<rect x="12" y="518.98" width="4" height="1.1" fill="#1a1a1a"/>
<rect x="12" y="524.95" width="4" height="1.1" fill="#1a1a1a"/>
<rect x="12" y="530.91" width="4" height="1.1" fill="#1a1a1a"/>
<rect x="6" y="536.78" width="10" height="1.3" fill="#1a1a1a"/>
<text transform="translate(11.5 535.88) rotate(-90)" font-size="9.5" fill="#1a1a1a" font-family="Liberation Sans">200</text>
<rect x="12" y="542.85" width="4" height="1.1" fill="#1a1a1a"/>
<rect x="12" y="548.81" width="4" height="1.1" fill="#1a1a1a"/>
<rect x="12" y="554.78" width="4" height="1.1" fill="#1a1a1a"/>
<rect x="12" y="560.74" width="4" height="1.1" fill="#1a1a1a"/>
<rect x="9" y="566.61" width="7" height="1.2" fill="#1a1a1a"/>
<rect x="12" y="572.68" width="4" height="1.1" fill="#1a1a1a"/>
<rect x="0" y="522.3" width="17" height="1.3" fill="#d03020"/>
</svg>
<div class="a" style="left:139px;top:86px;width:16px;height:15px;background:#262626;border:1px solid #b0b0b0;color:#f4f4f4;font-size:8px;line-height:13px;text-align:center;letter-spacing:-0.3px;-webkit-text-stroke:0.2px #fff">mm</div>
<!--/RULER-->
<div id="canvas" class="a"></div>
<!--DIAG-->
<svg class="a" style="left:0;top:0;will-change:transform" width="1200" height="694" font-family="Liberation Sans"><defs><clipPath id="cv"><rect x="156" y="103" width="1031" height="559"/></clipPath></defs><g clip-path="url(#cv)"><path d="M156.0,291.3 L167.3,291.3" fill="none" stroke="#1a1a1a" stroke-width="1.25"/>
<path d="M243.8,291.3 L418.0,291.3" fill="none" stroke="#1a1a1a" stroke-width="1.25"/>
<path d="M437.7,291.3 L523.4,291.3" fill="none" stroke="#1a1a1a" stroke-width="1.25"/>
<path d="M534.0,291.3 L575.6,291.3" fill="none" stroke="#1a1a1a" stroke-width="1.25"/>
<rect x="167.3" y="272.2" width="76.5" height="38.4" rx="0" fill="#fff" stroke="#1a1a1a" stroke-width="1.6"/>
<path d="M186.4,272.2 L186.4,310.6" fill="none" stroke="#1a1a1a" stroke-width="1.2"/>
<path d="M224.7,272.2 L224.7,310.6" fill="none" stroke="#1a1a1a" stroke-width="1.2"/>
<circle cx="205.6" cy="291.4" r="18.9" fill="#fff" stroke="#1a1a1a" stroke-width="1.4"/>
<path d="M262.4,225.0 L262.4,291.3" fill="none" stroke="#1a1a1a" stroke-width="1.25"/>
<path d="M252.4,233.9 L272.4,233.9" fill="none" stroke="#1a1a1a" stroke-width="1.4"/>
<text x="262.4" y="231.9" font-size="5" text-anchor="middle" fill="#111" stroke="#111" stroke-width="0.25">PT</text>
<text x="262.4" y="240.9" font-size="5" text-anchor="middle" fill="#111" stroke="#111" stroke-width="0.25">I-3</text>
<path d="M257.4,253.3 L267.4,253.3 L257.4,272.2 L267.4,272.2 Z" fill="#fff" stroke="#1a1a1a" stroke-width="1.3" stroke-linejoin="miter"/>
<path d="M300.2,272.2 L300.2,291.3" fill="none" stroke="#1a1a1a" stroke-width="1.25"/>
<path d="M295.2,253.3 L305.2,253.3 L295.2,272.2 L305.2,272.2 Z" fill="#fff" stroke="#1a1a1a" stroke-width="1.3" stroke-linejoin="miter"/>
<rect x="300.0" y="195.7" width="19.6" height="19.3" rx="1.5" fill="#fff" stroke="#1a1a1a" stroke-width="1.5"/>
<path d="M309.8,195.7 L309.8,215.0" fill="none" stroke="#1a1a1a" stroke-width="0.9"/>
<path d="M300.0,205.3 L319.6,205.3" fill="none" stroke="#1a1a1a" stroke-width="0.9"/>
<text x="309.8" y="203.2" font-size="5" text-anchor="middle" fill="#111" stroke="#111" stroke-width="0.25">I/P</text>
<text x="309.8" y="212.5" font-size="5" text-anchor="middle" fill="#111" stroke="#111" stroke-width="0.25">I-4</text>
<rect x="338.0" y="195.7" width="19.6" height="19.3" rx="1.5" fill="#fff" stroke="#1a1a1a" stroke-width="1.5"/>
<path d="M347.8,195.7 L347.8,215.0" fill="none" stroke="#1a1a1a" stroke-width="0.9"/>
<path d="M338.0,205.3 L357.6,205.3" fill="none" stroke="#1a1a1a" stroke-width="0.9"/>
<text x="347.8" y="203.2" font-size="5" text-anchor="middle" fill="#111" stroke="#111" stroke-width="0.25">I/P</text>
<text x="347.8" y="212.5" font-size="5" text-anchor="middle" fill="#111" stroke="#111" stroke-width="0.25">I-5</text>
<path d="M319.6,205.8 L338.0,205.8" fill="none" stroke="#1a1a1a" stroke-width="1.25"/>
<path d="M347.5,215.0 L347.5,234.0" fill="none" stroke="#1a1a1a" stroke-width="1.25"/>
<rect x="338.0" y="234.0" width="19.6" height="19.0" rx="1.5" fill="#fff" stroke="#1a1a1a" stroke-width="1.5"/>
<path d="M347.8,234.0 L357.6,243.5 L347.8,253.0 L338.0,243.5 Z" fill="none" stroke="#1a1a1a" stroke-width="1"/>
<path d="M338.0,243.5 L357.6,243.5" fill="none" stroke="#1a1a1a" stroke-width="0.9"/>
<text x="347.8" y="241.5" font-size="5" text-anchor="middle" fill="#111" stroke="#111" stroke-width="0.25">MCK</text>
<text x="347.8" y="250.5" font-size="5" text-anchor="middle" fill="#111" stroke="#111" stroke-width="0.25">L-3</text>
<path d="M347.5,253.0 L347.5,272.0" fill="none" stroke="#1a1a1a" stroke-width="1.25"/>
<path d="M328.0,291.3 L367.0,291.3" fill="none" stroke="#1a1a1a" stroke-width="2.0"/>
<path d="M338.5,283.3 L356.5,299.3" fill="none" stroke="#1a1a1a" stroke-width="1.3"/>
<path d="M338.5,299.3 L356.5,283.3" fill="none" stroke="#1a1a1a" stroke-width="1.3"/>
<path d="M328.5,313.6 L338.0,305.6 Q347.5,311.6 357.0,305.6 L367.0,313.6 Z" fill="#fff" stroke="#1a1a1a" stroke-width="1.6" stroke-linejoin="round"/>
<path d="M395.0,230.3 L395.0,291.3" fill="none" stroke="#1a1a1a" stroke-width="1.25"/>
<path d="M385.0,240.0 L405.0,240.0" fill="none" stroke="#1a1a1a" stroke-width="1.4"/>
<text x="395.0" y="238.0" font-size="5" text-anchor="middle" fill="#111" stroke="#111" stroke-width="0.25">PT</text>
<text x="395.0" y="247.0" font-size="5" text-anchor="middle" fill="#111" stroke="#111" stroke-width="0.25">I-8</text>
<path d="M390.0,258.4 L400.0,258.4 L390.0,278.0 L400.0,278.0 Z" fill="#fff" stroke="#1a1a1a" stroke-width="1.3" stroke-linejoin="miter"/>
<path d="M418.0,286.0 L418.0,295.3" fill="none" stroke="#1a1a1a" stroke-width="1.6"/>
<path d="M418.0,286.0 L437.7,295.3" fill="none" stroke="#1a1a1a" stroke-width="1.6"/>
<path d="M437.7,288.0 L437.7,295.3" fill="none" stroke="#1a1a1a" stroke-width="1.6"/>
<circle cx="418.0" cy="286.0" r="1.3" fill="#1a1a1a"/>
<path d="M461.9,262.6 L461.9,271.0" fill="none" stroke="#1a1a1a" stroke-width="1.25"/>
<path d="M458.4,271.0 L461.9,271.0" fill="none" stroke="#1a1a1a" stroke-width="1.25"/>
<path d="M458.4,271.0 L458.4,291.3" fill="none" stroke="#1a1a1a" stroke-width="1.25"/>
<path d="M456.9,243.4 L466.9,243.4 L456.9,262.6 L466.9,262.6 Z" fill="#fff" stroke="#1a1a1a" stroke-width="1.3" stroke-linejoin="miter"/>
<path d="M491.9,297.0 L491.9,623.5" fill="none" stroke="#1a1a1a" stroke-width="1.25"/>
<path d="M485.9,297.3 L491.9,291.3 L497.9,297.3 Z" fill="#1a1a1a"/>
<path d="M523.4,286.5 L531.0,288.1 Q534.0,288.1 534.0,291.1 Q534.0,294.2 531.0,294.2 L523.4,295.8 Z" fill="#fff" stroke="#1a1a1a" stroke-width="1.5" stroke-linejoin="round"/>
<path d="M528.3,191.0 L528.3,239.5" fill="none" stroke="#1a1a1a" stroke-width="1.25"/>
<path d="M518.3,200.8 L538.3,200.8" fill="none" stroke="#1a1a1a" stroke-width="1.4"/>
<text x="528.3" y="198.8" font-size="5" text-anchor="middle" fill="#111" stroke="#111" stroke-width="0.25">PT</text>
<text x="528.3" y="207.8" font-size="5" text-anchor="middle" fill="#111" stroke="#111" stroke-width="0.25">I-9</text>
<path d="M523.3,219.7 L533.3,219.7 L523.3,239.5 L533.3,239.5 Z" fill="#fff" stroke="#1a1a1a" stroke-width="1.3" stroke-linejoin="miter"/>
<path d="M528.3,239.5 L528.3,253.3 L575.6,253.3" fill="none" stroke="#1a1a1a" stroke-width="1.25"/>
<rect x="575.6" y="210.6" width="126.1" height="89.9" rx="0" fill="#fff" stroke="#1a1a1a" stroke-width="1.7"/>
<circle cx="607.5" cy="236.5" r="19.0" fill="#fff" stroke="#1a1a1a" stroke-width="1.5"/>
<circle cx="607.5" cy="274.6" r="19.0" fill="#fff" stroke="#1a1a1a" stroke-width="1.5"/>
<path d="M587.6,256.2 L619.5,256.2" fill="none" stroke="#1a1a1a" stroke-width="1.2"/>
<path d="M619.5,251.2 L626.5,256.2 L619.5,261.2 Z" fill="#1a1a1a"/>
<rect x="614.4" y="109.0" width="36.2" height="19.0" rx="1" fill="#fff" stroke="#1a1a1a" stroke-width="1.5"/>
<path d="M624.5,109.0 L624.5,128.0" fill="none" stroke="#1a1a1a" stroke-width="1.0"/>
<path d="M641.2,109.0 L641.2,128.0" fill="none" stroke="#1a1a1a" stroke-width="1.0"/>
<path d="M614.4,118.5 L650.6,118.5" fill="none" stroke="#1a1a1a" stroke-width="1.0"/>
<text x="632.9" y="116.3" font-size="5.5" text-anchor="middle" fill="#111" stroke="#111" stroke-width="0.25">I/P</text>
<text x="632.9" y="125.7" font-size="5.5" text-anchor="middle" fill="#111" stroke="#111" stroke-width="0.25">I-26</text>
<path d="M632.8,128.0 L632.8,146.0" fill="none" stroke="#1a1a1a" stroke-width="1.25"/>
<rect x="614.4" y="146.0" width="36.2" height="19.0" rx="1" fill="#fff" stroke="#1a1a1a" stroke-width="1.5"/>
<path d="M624.5,146.0 L624.5,165.0" fill="none" stroke="#1a1a1a" stroke-width="1.0"/>
<path d="M641.2,146.0 L641.2,165.0" fill="none" stroke="#1a1a1a" stroke-width="1.0"/>
<path d="M614.4,155.5 L650.6,155.5" fill="none" stroke="#1a1a1a" stroke-width="1.0"/>
<text x="632.9" y="153.3" font-size="5.5" text-anchor="middle" fill="#111" stroke="#111" stroke-width="0.25">I/P</text>
<text x="632.9" y="162.7" font-size="5.5" text-anchor="middle" fill="#111" stroke="#111" stroke-width="0.25">I-27</text>
<path d="M632.8,165.0 L632.8,210.6" fill="none" stroke="#1a1a1a" stroke-width="1.25"/>
<rect x="718.4" y="109.0" width="37.0" height="19.0" rx="1" fill="#fff" stroke="#1a1a1a" stroke-width="1.5"/>
<path d="M728.8,109.0 L728.8,128.0" fill="none" stroke="#1a1a1a" stroke-width="1.0"/>
<path d="M745.8,109.0 L745.8,128.0" fill="none" stroke="#1a1a1a" stroke-width="1.0"/>
<path d="M718.4,118.5 L755.4,118.5" fill="none" stroke="#1a1a1a" stroke-width="1.0"/>
<text x="737.3" y="116.3" font-size="5.5" text-anchor="middle" fill="#111" stroke="#111" stroke-width="0.25">I/P</text>
<text x="737.3" y="125.7" font-size="5.5" text-anchor="middle" fill="#111" stroke="#111" stroke-width="0.25">I-28</text>
<path d="M737.0,128.0 L737.0,146.0" fill="none" stroke="#1a1a1a" stroke-width="1.25"/>
<rect x="718.4" y="146.0" width="37.0" height="19.0" rx="1" fill="#fff" stroke="#1a1a1a" stroke-width="1.5"/>
<path d="M728.8,146.0 L728.8,165.0" fill="none" stroke="#1a1a1a" stroke-width="1.0"/>
<path d="M745.8,146.0 L745.8,165.0" fill="none" stroke="#1a1a1a" stroke-width="1.0"/>
<path d="M718.4,155.5 L755.4,155.5" fill="none" stroke="#1a1a1a" stroke-width="1.0"/>
<text x="737.3" y="153.3" font-size="5.5" text-anchor="middle" fill="#111" stroke="#111" stroke-width="0.25">I/P</text>
<text x="737.3" y="162.7" font-size="5.5" text-anchor="middle" fill="#111" stroke="#111" stroke-width="0.25">I-29</text>
<rect x="776.0" y="109.0" width="36.4" height="19.0" rx="1" fill="#fff" stroke="#1a1a1a" stroke-width="1.5"/>
<path d="M786.2,109.0 L786.2,128.0" fill="none" stroke="#1a1a1a" stroke-width="1.0"/>
<path d="M802.9,109.0 L802.9,128.0" fill="none" stroke="#1a1a1a" stroke-width="1.0"/>
<path d="M776.0,118.5 L812.4,118.5" fill="none" stroke="#1a1a1a" stroke-width="1.0"/>
<text x="794.6" y="116.3" font-size="5.5" text-anchor="middle" fill="#111" stroke="#111" stroke-width="0.25">I/P</text>
<text x="794.6" y="125.7" font-size="5.5" text-anchor="middle" fill="#111" stroke="#111" stroke-width="0.25">I-30</text>
<path d="M794.0,128.0 L794.0,146.0" fill="none" stroke="#1a1a1a" stroke-width="1.25"/>
<rect x="776.0" y="146.0" width="36.4" height="19.0" rx="1" fill="#fff" stroke="#1a1a1a" stroke-width="1.5"/>
<path d="M786.2,146.0 L786.2,165.0" fill="none" stroke="#1a1a1a" stroke-width="1.0"/>
<path d="M802.9,146.0 L802.9,165.0" fill="none" stroke="#1a1a1a" stroke-width="1.0"/>
<path d="M776.0,155.5 L812.4,155.5" fill="none" stroke="#1a1a1a" stroke-width="1.0"/>
<text x="794.6" y="153.3" font-size="5.5" text-anchor="middle" fill="#111" stroke="#111" stroke-width="0.25">I/P</text>
<text x="794.6" y="162.7" font-size="5.5" text-anchor="middle" fill="#111" stroke="#111" stroke-width="0.25">I-31</text>
<path d="M598.4,103 L598.4,181 L823,181 L823,103" fill="none" stroke="#1a1a1a" stroke-width="1.4" stroke-dasharray="2.4 2"/>
<path d="M670.6,210.6 L670.6,195.6 L733.5,195.6" fill="none" stroke="#1a1a1a" stroke-width="1.25"/>
<path d="M726.5,189.6 L733.5,195.6 L726.5,201.6 Z" fill="#1a1a1a"/>
<path d="M740.0,195.6 L790.5,195.6" fill="none" stroke="#1a1a1a" stroke-width="1.25"/>
<path d="M783.5,189.6 L790.5,195.6 L783.5,201.6 Z" fill="#1a1a1a"/>
<path d="M797.0,195.6 L1025.3,195.6" fill="none" stroke="#1a1a1a" stroke-width="1.25"/>
<path d="M1018.3,189.6 L1025.3,195.6 L1018.3,201.6 Z" fill="#1a1a1a"/>
<path d="M1033.0,195.6 L1056.5,195.6" fill="none" stroke="#1a1a1a" stroke-width="1.25"/>
<path d="M1049.5,189.6 L1056.5,195.6 L1049.5,201.6 Z" fill="#1a1a1a"/>
<path d="M1063.0,195.6 L1183.0,195.6" fill="none" stroke="#1a1a1a" stroke-width="1.25"/>
<path d="M1176.0,189.6 L1183.0,195.6 L1176.0,201.6 Z" fill="#1a1a1a"/>
<path d="M701.7,224.6 L733.5,224.6" fill="none" stroke="#1a1a1a" stroke-width="1.25"/>
<path d="M726.5,218.6 L733.5,224.6 L726.5,230.6 Z" fill="#1a1a1a"/>
<path d="M740.0,224.6 L790.5,224.6" fill="none" stroke="#1a1a1a" stroke-width="1.25"/>
<path d="M783.5,218.6 L790.5,224.6 L783.5,230.6 Z" fill="#1a1a1a"/>
<path d="M797.0,224.6 L817.0,224.6" fill="none" stroke="#1a1a1a" stroke-width="1.25"/>
<path d="M817.0,219.6 L822.0,224.6 L817.0,229.6 Z" fill="#1a1a1a"/>
<path d="M822.0,219.6 L841.5,229.6 L841.5,219.6 L822.0,229.6 Z" fill="#fff" stroke="#1a1a1a" stroke-width="1.3"/>
<path d="M841.5,224.6 L880.0,224.6" fill="none" stroke="#1a1a1a" stroke-width="1.25"/>
<path d="M873.0,218.6 L880.0,224.6 L873.0,230.6 Z" fill="#1a1a1a"/>
<path d="M880.0,224.6 L897.0,224.6" fill="none" stroke="#1a1a1a" stroke-width="1.25"/>
<path d="M896.6,219.8 L897.6,219.8 Q902.8,219.8 902.8,225.0 Q902.8,230.2 897.6,230.2 L896.6,230.2 Z" fill="#fff" stroke="#1a1a1a" stroke-width="1.5" stroke-linejoin="round"/>
<path d="M737.0,165.0 L737.0,319.4 L632.5,319.4 L632.5,362.8" fill="none" stroke="#1a1a1a" stroke-width="1.25"/>
<path d="M794.0,165.0 L794.0,480.4 L632.9,480.4 L632.9,566.6" fill="none" stroke="#1a1a1a" stroke-width="1.25"/>
<path d="M879.5,224.6 L879.5,661.0" fill="none" stroke="#1a1a1a" stroke-width="1.25"/>
<path d="M874.5,324.4 L884.5,324.4 L874.5,342.8 L884.5,342.8 Z" fill="#fff" stroke="#1a1a1a" stroke-width="1.3" stroke-linejoin="miter"/>
<path d="M879.5,271.6 L923.4,271.6 L923.4,224.4 L1056.0,224.4" fill="none" stroke="#1a1a1a" stroke-width="1.25"/>
<path d="M1063.0,224.4 L1126.4,224.4" fill="none" stroke="#1a1a1a" stroke-width="1.25"/>
<path d="M918.4,243.3 L928.4,243.3 L918.4,263.0 L928.4,263.0 Z" fill="#fff" stroke="#1a1a1a" stroke-width="1.3" stroke-linejoin="miter"/>
<path d="M879.5,376.2 L956.8,376.2 L956.8,249.9 L1126.4,249.9" fill="none" stroke="#1a1a1a" stroke-width="1.25"/>
<path d="M879.5,300.2 L953.0,300.2" fill="none" stroke="#1a1a1a" stroke-width="1.25"/>
<path d="M960.0,300.2 L1126.4,300.2" fill="none" stroke="#1a1a1a" stroke-width="1.25"/>
<path d="M1033.3,295.2 L1052.3,305.2 L1052.3,295.2 L1033.3,305.2 Z" fill="#fff" stroke="#1a1a1a" stroke-width="1.3"/>
<path d="M883.0,348.5 L953.4,348.5" fill="none" stroke="#1a1a1a" stroke-width="1.25"/>
<path d="M946.4,342.5 L953.4,348.5 L946.4,354.5 Z" fill="#1a1a1a"/>
<path d="M960.0,348.5 L1183.0,348.5" fill="none" stroke="#1a1a1a" stroke-width="1.25"/>
<path d="M1176.0,342.5 L1183.0,348.5 L1176.0,354.5 Z" fill="#1a1a1a"/>
<path d="M1029.5,126.0 L1029.5,224.4" fill="none" stroke="#1a1a1a" stroke-width="1.25"/>
<path d="M1023.8,126.3 L1034.2,126.3 L1029.0,121.3 Z" fill="#1a1a1a" stroke="#1a1a1a" stroke-width="0.8" stroke-linejoin="round"/>
<path d="M1024.2,119.8 L1033.8,119.8 L1029.0,110.8 Z" fill="#fff" stroke="#1a1a1a" stroke-width="1.3"/>
<path d="M1029.0,110.8 L1038.5,106.0 L1038.5,115.6 Z" fill="#fff" stroke="#1a1a1a" stroke-width="1.3"/>
<path d="M1019.5,110.8 L1029.0,110.8" fill="none" stroke="#1a1a1a" stroke-width="1.3"/>
<ellipse cx="1023.5" cy="110.8" rx="2" ry="1.1" fill="#1a1a1a"/>
<path d="M1038.5,110.6 L1183.0,110.6" fill="none" stroke="#1a1a1a" stroke-width="1.25"/>
<path d="M1176.0,104.6 L1183.0,110.6 L1176.0,116.6 Z" fill="#1a1a1a"/>
<path d="M1060.0,154.5 L1060.0,249.9" fill="none" stroke="#1a1a1a" stroke-width="1.25"/>
<path d="M1054.8,155.0 L1065.2,155.0 L1060.0,150.0 Z" fill="#1a1a1a" stroke="#1a1a1a" stroke-width="0.8" stroke-linejoin="round"/>
<path d="M1055.2,148.5 L1064.8,148.5 L1060.0,139.5 Z" fill="#fff" stroke="#1a1a1a" stroke-width="1.3"/>
<path d="M1060.0,139.5 L1069.5,134.7 L1069.5,144.3 Z" fill="#fff" stroke="#1a1a1a" stroke-width="1.3"/>
<path d="M1050.5,139.5 L1060.0,139.5" fill="none" stroke="#1a1a1a" stroke-width="1.3"/>
<ellipse cx="1054.5" cy="139.5" rx="2" ry="1.1" fill="#1a1a1a"/>
<path d="M1069.5,139.3 L1183.0,139.3" fill="none" stroke="#1a1a1a" stroke-width="1.25"/>
<path d="M1176.0,133.3 L1183.0,139.3 L1176.0,145.3 Z" fill="#1a1a1a"/>
<path d="M1126.4,215.2 L1174.3,215.2 L1183.3,224.5 L1174.3,233.8 L1126.4,233.8 Z" fill="#f7ec3c" stroke="#1a1a1a" stroke-width="1.6" stroke-linejoin="round"/>
<path d="M1126.4,240.5 L1174.3,240.5 L1183.3,250.1 L1174.3,259.6 L1126.4,259.6 Z" fill="#f7ec3c" stroke="#1a1a1a" stroke-width="1.6" stroke-linejoin="round"/>
<path d="M1126.4,291.2 L1174.3,291.2 L1183.3,300.7 L1174.3,310.2 L1126.4,310.2 Z" fill="#f7ec3c" stroke="#1a1a1a" stroke-width="1.6" stroke-linejoin="round"/>
<path d="M156.0,443.5 L166.7,443.5" fill="none" stroke="#1a1a1a" stroke-width="1.25"/>
<path d="M243.1,443.5 L575.9,443.5" fill="none" stroke="#1a1a1a" stroke-width="1.25"/>
<rect x="166.7" y="424.4" width="76.4" height="38.4" rx="0" fill="#fff" stroke="#1a1a1a" stroke-width="1.6"/>
<path d="M185.8,424.4 L185.8,462.8" fill="none" stroke="#1a1a1a" stroke-width="1.2"/>
<path d="M224.0,424.4 L224.0,462.8" fill="none" stroke="#1a1a1a" stroke-width="1.2"/>
<circle cx="204.9" cy="443.6" r="18.9" fill="#fff" stroke="#1a1a1a" stroke-width="1.4"/>
<path d="M271.8,386.5 L271.8,443.5" fill="none" stroke="#1a1a1a" stroke-width="1.25"/>
<path d="M261.8,395.7 L281.8,395.7" fill="none" stroke="#1a1a1a" stroke-width="1.4"/>
<text x="271.8" y="393.7" font-size="5" text-anchor="middle" fill="#111" stroke="#111" stroke-width="0.25">PT</text>
<text x="271.8" y="402.7" font-size="5" text-anchor="middle" fill="#111" stroke="#111" stroke-width="0.25">I-13</text>
<path d="M266.8,414.6 L276.8,414.6 L266.8,434.2 L276.8,434.2 Z" fill="#fff" stroke="#1a1a1a" stroke-width="1.3" stroke-linejoin="miter"/>
<path d="M309.8,424.4 L309.8,443.5" fill="none" stroke="#1a1a1a" stroke-width="1.25"/>
<path d="M304.8,404.8 L314.8,404.8 L304.8,424.4 L314.8,424.4 Z" fill="#fff" stroke="#1a1a1a" stroke-width="1.3" stroke-linejoin="miter"/>
<rect x="300.0" y="347.9" width="19.7" height="19.3" rx="1.5" fill="#fff" stroke="#1a1a1a" stroke-width="1.5"/>
<path d="M309.9,347.9 L309.9,367.2" fill="none" stroke="#1a1a1a" stroke-width="0.9"/>
<path d="M300.0,357.5 L319.7,357.5" fill="none" stroke="#1a1a1a" stroke-width="0.9"/>
<text x="309.9" y="355.3" font-size="5" text-anchor="middle" fill="#111" stroke="#111" stroke-width="0.25">I/P</text>
<text x="309.9" y="364.7" font-size="5" text-anchor="middle" fill="#111" stroke="#111" stroke-width="0.25">I-15</text>
<rect x="338.3" y="347.9" width="20.1" height="19.3" rx="1.5" fill="#fff" stroke="#1a1a1a" stroke-width="1.5"/>
<path d="M348.4,347.9 L348.4,367.2" fill="none" stroke="#1a1a1a" stroke-width="0.9"/>
<path d="M338.3,357.5 L358.4,357.5" fill="none" stroke="#1a1a1a" stroke-width="0.9"/>
<text x="348.4" y="355.3" font-size="5" text-anchor="middle" fill="#111" stroke="#111" stroke-width="0.25">I/P</text>
<text x="348.4" y="364.7" font-size="5" text-anchor="middle" fill="#111" stroke="#111" stroke-width="0.25">I-16</text>
<path d="M319.7,357.5 L338.3,357.5" fill="none" stroke="#1a1a1a" stroke-width="1.25"/>
<path d="M348.0,367.2 L348.0,376.5" fill="none" stroke="#1a1a1a" stroke-width="1.25"/>
<rect x="338.3" y="376.5" width="20.1" height="19.1" rx="1.5" fill="#fff" stroke="#1a1a1a" stroke-width="1.5"/>
<path d="M348.4,376.5 L358.4,386.1 L348.4,395.6 L338.3,386.1 Z" fill="none" stroke="#1a1a1a" stroke-width="1"/>
<path d="M338.3,386.1 L358.4,386.1" fill="none" stroke="#1a1a1a" stroke-width="0.9"/>
<text x="348.4" y="384.1" font-size="5" text-anchor="middle" fill="#111" stroke="#111" stroke-width="0.25">MCK</text>
<text x="348.4" y="393.1" font-size="5" text-anchor="middle" fill="#111" stroke="#111" stroke-width="0.25">L-17</text>
<path d="M348.0,395.6 L348.0,424.3" fill="none" stroke="#1a1a1a" stroke-width="1.25"/>
<path d="M328.5,443.5 L367.5,443.5" fill="none" stroke="#1a1a1a" stroke-width="2.0"/>
<path d="M339.0,435.5 L357.0,451.5" fill="none" stroke="#1a1a1a" stroke-width="1.3"/>
<path d="M339.0,451.5 L357.0,435.5" fill="none" stroke="#1a1a1a" stroke-width="1.3"/>
<path d="M329.0,466.0 L338.5,457.8 Q348.0,463.8 357.5,457.8 L367.5,466.0 Z" fill="#fff" stroke="#1a1a1a" stroke-width="1.6" stroke-linejoin="round"/>
<path d="M395.1,386.8 L395.1,443.5" fill="none" stroke="#1a1a1a" stroke-width="1.25"/>
<path d="M385.1,395.6 L405.1,395.6" fill="none" stroke="#1a1a1a" stroke-width="1.4"/>
<text x="395.1" y="393.6" font-size="5" text-anchor="middle" fill="#111" stroke="#111" stroke-width="0.25">PT</text>
<text x="395.1" y="402.6" font-size="5" text-anchor="middle" fill="#111" stroke="#111" stroke-width="0.25">I-14</text>
<path d="M390.1,414.5 L400.1,414.5 L390.1,434.1 L400.1,434.1 Z" fill="#fff" stroke="#1a1a1a" stroke-width="1.3" stroke-linejoin="miter"/>
<path d="M423.3,438.5 L443.6,448.5 L443.6,438.5 L423.3,448.5 Z" fill="#fff" stroke="#1a1a1a" stroke-width="1.3"/>
<path d="M461.7,424.3 L461.7,443.5" fill="none" stroke="#1a1a1a" stroke-width="1.25"/>
<path d="M456.7,404.7 L466.7,404.7 L456.7,424.3 L466.7,424.3 Z" fill="#fff" stroke="#1a1a1a" stroke-width="1.3" stroke-linejoin="miter"/>
<path d="M486.1,436.9 L496.1,436.9 L486.1,449.5 L496.1,449.5 Z" fill="#1a1a1a" stroke="#1a1a1a" stroke-width="1.3" stroke-linejoin="miter"/>
<path d="M523.4,438.4 L531.4,440.0 Q534.4,440.0 534.4,443.0 Q534.4,446.0 531.4,446.0 L523.4,447.6 Z" fill="#fff" stroke="#1a1a1a" stroke-width="1.5" stroke-linejoin="round"/>
<path d="M532.0,339.0 L532.0,386.5" fill="none" stroke="#1a1a1a" stroke-width="1.25"/>
<path d="M522.0,348.1 L542.0,348.1" fill="none" stroke="#1a1a1a" stroke-width="1.4"/>
<text x="532.0" y="346.1" font-size="5" text-anchor="middle" fill="#111" stroke="#111" stroke-width="0.25">PT</text>
<text x="532.0" y="355.1" font-size="5" text-anchor="middle" fill="#111" stroke="#111" stroke-width="0.25">I-18</text>
<path d="M527.0,366.9 L537.0,366.9 L527.0,386.5 L537.0,386.5 Z" fill="#fff" stroke="#1a1a1a" stroke-width="1.3" stroke-linejoin="miter"/>
<path d="M532.0,386.5 L532.0,395.1 L575.9,395.1" fill="none" stroke="#1a1a1a" stroke-width="1.25"/>
<rect x="575.9" y="362.8" width="125.7" height="89.4" rx="0" fill="#fff" stroke="#1a1a1a" stroke-width="1.7"/>
<circle cx="608.5" cy="388.5" r="18.8" fill="#fff" stroke="#1a1a1a" stroke-width="1.5"/>
<circle cx="608.5" cy="426.8" r="18.8" fill="#fff" stroke="#1a1a1a" stroke-width="1.5"/>
<path d="M587.9,407.8 L620.5,407.8" fill="none" stroke="#1a1a1a" stroke-width="1.2"/>
<path d="M620.5,402.8 L627.5,407.8 L620.5,412.8 Z" fill="#1a1a1a"/>
<path d="M670.4,362.8 L670.4,348.1 L791.0,348.1" fill="none" stroke="#1a1a1a" stroke-width="1.25"/>
<path d="M784.0,342.1 L791.0,348.1 L784.0,354.1 Z" fill="#1a1a1a"/>
<path d="M798.0,348.1 L876.9,348.1" fill="none" stroke="#1a1a1a" stroke-width="1.25"/>
<path d="M869.9,342.1 L876.9,348.1 L869.9,354.1 Z" fill="#1a1a1a"/>
<path d="M701.6,433.2 L791.0,433.2" fill="none" stroke="#1a1a1a" stroke-width="1.25"/>
<path d="M784.0,427.2 L791.0,433.2 L784.0,439.2 Z" fill="#1a1a1a"/>
<path d="M798.0,433.2 L817.0,433.2" fill="none" stroke="#1a1a1a" stroke-width="1.25"/>
<path d="M817.0,428.2 L822.0,433.2 L817.0,438.2 Z" fill="#1a1a1a"/>
<path d="M822.0,428.2 L841.4,438.2 L841.4,428.2 L822.0,438.2 Z" fill="#fff" stroke="#1a1a1a" stroke-width="1.3"/>
<path d="M841.4,433.2 L876.9,433.2" fill="none" stroke="#1a1a1a" stroke-width="1.25"/>
<path d="M869.9,427.2 L876.9,433.2 L869.9,439.2 Z" fill="#1a1a1a"/>
<path d="M879.5,462.2 L1126.0,462.2" fill="none" stroke="#1a1a1a" stroke-width="1.25"/>
<path d="M1033.3,457.2 L1052.7,467.2 L1052.7,457.2 L1033.3,467.2 Z" fill="#fff" stroke="#1a1a1a" stroke-width="1.3"/>
<path d="M1126.0,452.5 L1174.0,452.5 L1183.0,462.1 L1174.0,471.6 L1126.0,471.6 Z" fill="#f7ec3c" stroke="#1a1a1a" stroke-width="1.6" stroke-linejoin="round"/>
<path d="M874.5,485.7 L884.5,485.7 L874.5,504.8 L884.5,504.8 Z" fill="#fff" stroke="#1a1a1a" stroke-width="1.3" stroke-linejoin="miter"/>
<path d="M156.0,509.4 L486.0,509.4" fill="none" stroke="#1a1a1a" stroke-width="1.25"/>
<path d="M484.3,503.4 L491.3,509.4 L484.3,515.4 Z" fill="#1a1a1a"/>
<path d="M156.0,623.5 L167.2,623.5" fill="none" stroke="#1a1a1a" stroke-width="1.25"/>
<path d="M243.6,623.5 L575.6,623.5" fill="none" stroke="#1a1a1a" stroke-width="1.25"/>
<rect x="167.2" y="604.2" width="76.4" height="38.4" rx="0" fill="#fff" stroke="#1a1a1a" stroke-width="1.6"/>
<path d="M186.3,604.2 L186.3,642.6" fill="none" stroke="#1a1a1a" stroke-width="1.2"/>
<path d="M224.5,604.2 L224.5,642.6" fill="none" stroke="#1a1a1a" stroke-width="1.2"/>
<circle cx="205.4" cy="623.4" r="18.9" fill="#fff" stroke="#1a1a1a" stroke-width="1.4"/>
<path d="M271.8,567.0 L271.8,623.5" fill="none" stroke="#1a1a1a" stroke-width="1.25"/>
<path d="M261.8,576.0 L281.8,576.0" fill="none" stroke="#1a1a1a" stroke-width="1.4"/>
<text x="271.8" y="574.0" font-size="5" text-anchor="middle" fill="#111" stroke="#111" stroke-width="0.25">PT</text>
<text x="271.8" y="583.0" font-size="5" text-anchor="middle" fill="#111" stroke="#111" stroke-width="0.25">I-33</text>
<path d="M266.8,594.4 L276.8,594.4 L266.8,613.5 L276.8,613.5 Z" fill="#fff" stroke="#1a1a1a" stroke-width="1.3" stroke-linejoin="miter"/>
<path d="M309.8,604.9 L309.8,623.5" fill="none" stroke="#1a1a1a" stroke-width="1.25"/>
<path d="M304.8,585.2 L314.8,585.2 L304.8,604.9 L314.8,604.9 Z" fill="#fff" stroke="#1a1a1a" stroke-width="1.3" stroke-linejoin="miter"/>
<rect x="300.2" y="528.4" width="20.0" height="19.2" rx="1.5" fill="#fff" stroke="#1a1a1a" stroke-width="1.5"/>
<path d="M310.2,528.4 L310.2,547.6" fill="none" stroke="#1a1a1a" stroke-width="0.9"/>
<path d="M300.2,538.0 L320.2,538.0" fill="none" stroke="#1a1a1a" stroke-width="0.9"/>
<text x="310.2" y="535.8" font-size="5" text-anchor="middle" fill="#111" stroke="#111" stroke-width="0.25">I/P</text>
<text x="310.2" y="545.1" font-size="5" text-anchor="middle" fill="#111" stroke="#111" stroke-width="0.25">I-19</text>
<rect x="337.6" y="528.4" width="20.2" height="19.2" rx="1.5" fill="#fff" stroke="#1a1a1a" stroke-width="1.5"/>
<path d="M347.7,528.4 L347.7,547.6" fill="none" stroke="#1a1a1a" stroke-width="0.9"/>
<path d="M337.6,538.0 L357.8,538.0" fill="none" stroke="#1a1a1a" stroke-width="0.9"/>
<text x="347.7" y="535.8" font-size="5" text-anchor="middle" fill="#111" stroke="#111" stroke-width="0.25">I/P</text>
<text x="347.7" y="545.1" font-size="5" text-anchor="middle" fill="#111" stroke="#111" stroke-width="0.25">I-20</text>
<path d="M320.2,538.0 L337.6,538.0" fill="none" stroke="#1a1a1a" stroke-width="1.25"/>
<path d="M348.0,547.6 L348.0,565.2" fill="none" stroke="#1a1a1a" stroke-width="1.25"/>
<rect x="337.6" y="565.2" width="20.2" height="19.4" rx="1.5" fill="#fff" stroke="#1a1a1a" stroke-width="1.5"/>
<path d="M347.7,565.2 L357.8,574.9 L347.7,584.6 L337.6,574.9 Z" fill="none" stroke="#1a1a1a" stroke-width="1"/>
<path d="M337.6,574.9 L357.8,574.9" fill="none" stroke="#1a1a1a" stroke-width="0.9"/>
<text x="347.7" y="572.9" font-size="5" text-anchor="middle" fill="#111" stroke="#111" stroke-width="0.25">MCK</text>
<text x="347.7" y="582.1" font-size="5" text-anchor="middle" fill="#111" stroke="#111" stroke-width="0.25">L-21</text>
<path d="M348.0,584.6 L348.0,604.0" fill="none" stroke="#1a1a1a" stroke-width="1.25"/>
<path d="M328.5,623.5 L367.5,623.5" fill="none" stroke="#1a1a1a" stroke-width="2.0"/>
<path d="M339.0,615.5 L357.0,631.5" fill="none" stroke="#1a1a1a" stroke-width="1.3"/>
<path d="M339.0,631.5 L357.0,615.5" fill="none" stroke="#1a1a1a" stroke-width="1.3"/>
<path d="M329.0,646.3 L338.5,638.3 Q348.0,644.3 357.5,638.3 L367.5,646.3 Z" fill="#fff" stroke="#1a1a1a" stroke-width="1.6" stroke-linejoin="round"/>
<path d="M395.4,566.5 L395.4,623.5" fill="none" stroke="#1a1a1a" stroke-width="1.25"/>
<path d="M385.4,575.6 L405.4,575.6" fill="none" stroke="#1a1a1a" stroke-width="1.4"/>
<text x="395.4" y="573.6" font-size="5" text-anchor="middle" fill="#111" stroke="#111" stroke-width="0.25">PT</text>
<text x="395.4" y="582.6" font-size="5" text-anchor="middle" fill="#111" stroke="#111" stroke-width="0.25">I-24</text>
<path d="M390.4,595.0 L400.4,595.0 L390.4,614.5 L400.4,614.5 Z" fill="#fff" stroke="#1a1a1a" stroke-width="1.3" stroke-linejoin="miter"/>
<path d="M423.4,618.5 L443.3,628.5 L443.3,618.5 L423.4,628.5 Z" fill="#fff" stroke="#1a1a1a" stroke-width="1.3"/>
<path d="M461.5,604.9 L461.5,623.5" fill="none" stroke="#1a1a1a" stroke-width="1.25"/>
<path d="M456.5,585.2 L466.5,585.2 L456.5,604.9 L466.5,604.9 Z" fill="#fff" stroke="#1a1a1a" stroke-width="1.3" stroke-linejoin="miter"/>
<path d="M485.3,617.5 L491.3,623.5 L497.3,617.5 Z" fill="#1a1a1a"/>
<path d="M523.7,618.3 L530.4,619.9 Q533.6,619.9 533.6,623.1 Q533.6,626.4 530.4,626.4 L523.7,628.0 Z" fill="#fff" stroke="#1a1a1a" stroke-width="1.5" stroke-linejoin="round"/>
<path d="M532.0,543.2 L532.0,590.3" fill="none" stroke="#1a1a1a" stroke-width="1.25"/>
<path d="M522.0,552.2 L542.0,552.2" fill="none" stroke="#1a1a1a" stroke-width="1.4"/>
<text x="532.0" y="550.2" font-size="5" text-anchor="middle" fill="#111" stroke="#111" stroke-width="0.25">PT</text>
<text x="532.0" y="559.2" font-size="5" text-anchor="middle" fill="#111" stroke="#111" stroke-width="0.25">I-35</text>
<path d="M527.0,570.9 L537.0,570.9 L527.0,590.3 L537.0,590.3 Z" fill="#fff" stroke="#1a1a1a" stroke-width="1.3" stroke-linejoin="miter"/>
<path d="M532.0,590.3 L532.0,604.1 L575.6,604.1" fill="none" stroke="#1a1a1a" stroke-width="1.25"/>
<rect x="575.6" y="566.6" width="126.2" height="89.5" rx="0" fill="#fff" stroke="#1a1a1a" stroke-width="1.7"/>
<circle cx="609.7" cy="593.1" r="19.2" fill="#fff" stroke="#1a1a1a" stroke-width="1.5"/>
<circle cx="609.7" cy="631.5" r="19.2" fill="#fff" stroke="#1a1a1a" stroke-width="1.5"/>
<path d="M587.6,612.3 L621.7,612.3" fill="none" stroke="#1a1a1a" stroke-width="1.2"/>
<path d="M621.7,607.3 L628.7,612.3 L621.7,617.3 Z" fill="#1a1a1a"/>
<path d="M670.4,566.6 L670.4,528.5 L877.5,528.5" fill="none" stroke="#1a1a1a" stroke-width="1.25"/>
<path d="M870.5,522.5 L877.5,528.5 L870.5,534.5 Z" fill="#1a1a1a"/>
<path d="M886.0,528.5 L1183.0,528.5" fill="none" stroke="#1a1a1a" stroke-width="1.25"/>
<path d="M1176.0,522.5 L1183.0,528.5 L1176.0,534.5 Z" fill="#1a1a1a"/>
<path d="M701.8,632.9 L815.0,632.9" fill="none" stroke="#1a1a1a" stroke-width="1.25"/>
<path d="M821.2,627.9 L815.2,632.9 L821.2,637.9 Z" fill="#1a1a1a"/>
<path d="M822.0,627.9 L841.7,637.9 L841.7,627.9 L822.0,637.9 Z" fill="#fff" stroke="#1a1a1a" stroke-width="1.3"/>
<path d="M841.7,632.9 L877.5,632.9" fill="none" stroke="#1a1a1a" stroke-width="1.25"/>
<path d="M870.5,626.9 L877.5,632.9 L870.5,638.9 Z" fill="#1a1a1a"/>
<path d="M879.5,557.0 L1126.0,557.0" fill="none" stroke="#1a1a1a" stroke-width="1.25"/>
<path d="M1033.3,552.0 L1052.7,562.0 L1052.7,552.0 L1033.3,562.0 Z" fill="#fff" stroke="#1a1a1a" stroke-width="1.3"/>
<path d="M1126.0,547.6 L1174.0,547.6 L1183.0,557.2 L1174.0,566.7 L1126.0,566.7 Z" fill="#f7ec3c" stroke="#1a1a1a" stroke-width="1.6" stroke-linejoin="round"/>
<path d="M879.5,595.0 L1126.0,595.0" fill="none" stroke="#1a1a1a" stroke-width="1.25"/>
<path d="M1033.3,590.0 L1052.7,600.0 L1052.7,590.0 L1033.3,600.0 Z" fill="#fff" stroke="#1a1a1a" stroke-width="1.3"/>
<path d="M1126.0,585.7 L1174.0,585.7 L1183.0,595.2 L1174.0,604.7 L1126.0,604.7 Z" fill="#f7ec3c" stroke="#1a1a1a" stroke-width="1.6" stroke-linejoin="round"/>
<text x="156.5" y="427.0" font-size="6.3" text-anchor="start" fill="#111" stroke="#111" stroke-width="0.25">-20</text>
<text x="156.5" y="474.0" font-size="6.3" text-anchor="start" fill="#111" stroke="#111" stroke-width="0.25">6</text>
<text x="156.5" y="654.0" font-size="6.3" text-anchor="start" fill="#111" stroke="#111" stroke-width="0.25">40</text>
<text x="156.5" y="322.0" font-size="6.3" text-anchor="start" fill="#111" stroke="#111" stroke-width="0.25">2</text>
<text x="165.0" y="265.5" font-size="6.3" text-anchor="middle" fill="#111" stroke="#111" stroke-width="0.3">V-3</text>
<text x="278.0" y="265.5" font-size="6.3" text-anchor="middle" fill="#111" stroke="#111" stroke-width="0.3">V-4</text>
<text x="316.0" y="265.5" font-size="6.3" text-anchor="middle" fill="#111" stroke="#111" stroke-width="0.3">V-5</text>
<text x="264.0" y="303.5" font-size="6.3" text-anchor="middle" fill="#111" stroke="#111" stroke-width="0.3">P-1</text>
<text x="310.0" y="284.5" font-size="6.3" text-anchor="middle" fill="#111" stroke="#111" stroke-width="0.3">P-31</text>
<text x="329.0" y="201.5" font-size="6.3" text-anchor="middle" fill="#111" stroke="#111" stroke-width="0.3">S-1</text>
<text x="356.0" y="228.5" font-size="6.3" text-anchor="middle" fill="#111" stroke="#111" stroke-width="0.3">S-2</text>
<text x="355.0" y="260.5" font-size="6.3" text-anchor="middle" fill="#111" stroke="#111" stroke-width="0.3">S-3</text>
<text x="411.0" y="270.5" font-size="6.3" text-anchor="middle" fill="#111" stroke="#111" stroke-width="0.3">V-6</text>
<text x="397.0" y="303.5" font-size="6.3" text-anchor="middle" fill="#111" stroke="#111" stroke-width="0.3">P-6</text>
<text x="459.0" y="303.5" font-size="6.3" text-anchor="middle" fill="#111" stroke="#111" stroke-width="0.3">P-6</text>
<text x="477.0" y="255.5" font-size="6.3" text-anchor="middle" fill="#111" stroke="#111" stroke-width="0.3">V-7</text>
<text x="458.0" y="280.5" font-size="6.3" text-anchor="middle" fill="#111" stroke="#111" stroke-width="0.3">P-31</text>
<text x="528.0" y="304.5" font-size="6.3" text-anchor="middle" fill="#111" stroke="#111" stroke-width="0.3">V-9</text>
<text x="546.0" y="231.5" font-size="6.3" text-anchor="middle" fill="#111" stroke="#111" stroke-width="0.3">V-10</text>
<text x="558.0" y="247.5" font-size="6.3" text-anchor="middle" fill="#111" stroke="#111" stroke-width="0.3">P-27</text>
<text x="642.0" y="203.5" font-size="6.3" text-anchor="middle" fill="#111" stroke="#111" stroke-width="0.3">S-14</text>
<text x="642.0" y="139.5" font-size="6.3" text-anchor="middle" fill="#111" stroke="#111" stroke-width="0.3">S-11</text>
<text x="747.0" y="139.5" font-size="6.3" text-anchor="middle" fill="#111" stroke="#111" stroke-width="0.3">S-12</text>
<text x="804.0" y="139.5" font-size="6.3" text-anchor="middle" fill="#111" stroke="#111" stroke-width="0.3">S-13</text>
<text x="763.0" y="236.5" font-size="6.3" text-anchor="middle" fill="#111" stroke="#111" stroke-width="0.3">P-41</text>
<text x="831.0" y="242.5" font-size="6.3" text-anchor="middle" fill="#111" stroke="#111" stroke-width="0.3">V-24</text>
<text x="887.0" y="205.5" font-size="6.3" text-anchor="middle" fill="#111" stroke="#111" stroke-width="0.3">P-34</text>
<text x="949.0" y="210.5" font-size="6.3" text-anchor="middle" fill="#111" stroke="#111" stroke-width="0.3">P-45</text>
<text x="939.0" y="255.5" font-size="6.3" text-anchor="middle" fill="#111" stroke="#111" stroke-width="0.3">V-27</text>
<text x="1038.0" y="174.5" font-size="6.3" text-anchor="middle" fill="#111" stroke="#111" stroke-width="0.3">P-48</text>
<text x="1105.0" y="193.5" font-size="6.3" text-anchor="middle" fill="#111" stroke="#111" stroke-width="0.3">P-49</text>
<text x="1019.0" y="107.5" font-size="6.3" text-anchor="middle" fill="#111" stroke="#111" stroke-width="0.3">V-44</text>
<text x="1052.0" y="133.5" font-size="6.3" text-anchor="middle" fill="#111" stroke="#111" stroke-width="0.3">V-45</text>
<text x="1017.0" y="288.5" font-size="6.3" text-anchor="middle" fill="#111" stroke="#111" stroke-width="0.3">P-47</text>
<text x="926.0" y="311.5" font-size="6.3" text-anchor="middle" fill="#111" stroke="#111" stroke-width="0.3">P-46</text>
<text x="1043.0" y="314.5" font-size="6.3" text-anchor="middle" fill="#111" stroke="#111" stroke-width="0.3">V-41</text>
<text x="864.0" y="336.5" font-size="6.3" text-anchor="middle" fill="#111" stroke="#111" stroke-width="0.3">V-32</text>
<text x="920.0" y="361.5" font-size="6.3" text-anchor="middle" fill="#111" stroke="#111" stroke-width="0.3">P35</text>
<text x="690.0" y="355.5" font-size="6.3" text-anchor="middle" fill="#111" stroke="#111" stroke-width="0.3">S-15</text>
<text x="286.0" y="427.5" font-size="6.3" text-anchor="middle" fill="#111" stroke="#111" stroke-width="0.3">V-21</text>
<text x="326.0" y="417.5" font-size="6.3" text-anchor="middle" fill="#111" stroke="#111" stroke-width="0.3">V-17</text>
<text x="331.0" y="352.5" font-size="6.3" text-anchor="middle" fill="#111" stroke="#111" stroke-width="0.3">S-5</text>
<text x="355.0" y="378.5" font-size="6.3" text-anchor="middle" fill="#111" stroke="#111" stroke-width="0.3">S-6</text>
<text x="355.0" y="412.5" font-size="6.3" text-anchor="middle" fill="#111" stroke="#111" stroke-width="0.3">S-7</text>
<text x="411.0" y="427.5" font-size="6.3" text-anchor="middle" fill="#111" stroke="#111" stroke-width="0.3">V-16</text>
<text x="433.0" y="461.5" font-size="6.3" text-anchor="middle" fill="#111" stroke="#111" stroke-width="0.3">V-46</text>
<text x="477.0" y="417.5" font-size="6.3" text-anchor="middle" fill="#111" stroke="#111" stroke-width="0.3">V-18</text>
<text x="547.0" y="379.5" font-size="6.3" text-anchor="middle" fill="#111" stroke="#111" stroke-width="0.3">V-22</text>
<text x="528.0" y="456.5" font-size="6.3" text-anchor="middle" fill="#111" stroke="#111" stroke-width="0.3">V-23</text>
<text x="753.0" y="443.5" font-size="6.3" text-anchor="middle" fill="#111" stroke="#111" stroke-width="0.3">P-40</text>
<text x="831.0" y="451.5" font-size="6.3" text-anchor="middle" fill="#111" stroke="#111" stroke-width="0.3">V-25</text>
<text x="953.0" y="472.5" font-size="6.3" text-anchor="middle" fill="#111" stroke="#111" stroke-width="0.3">P-44</text>
<text x="1043.0" y="480.5" font-size="6.3" text-anchor="middle" fill="#111" stroke="#111" stroke-width="0.3">V-37</text>
<text x="864.0" y="498.5" font-size="6.3" text-anchor="middle" fill="#111" stroke="#111" stroke-width="0.3">V-33</text>
<text x="665.0" y="502.5" font-size="6.3" text-anchor="middle" fill="#111" stroke="#111" stroke-width="0.3">S-16</text>
<text x="734.0" y="542.5" font-size="6.3" text-anchor="middle" fill="#111" stroke="#111" stroke-width="0.3">P-36</text>
<text x="318.0" y="518.5" font-size="6.3" text-anchor="middle" fill="#111" stroke="#111" stroke-width="0.3">S-7</text>
<text x="286.0" y="606.5" font-size="6.3" text-anchor="middle" fill="#111" stroke="#111" stroke-width="0.3">V-42</text>
<text x="326.0" y="597.5" font-size="6.3" text-anchor="middle" fill="#111" stroke="#111" stroke-width="0.3">V-43</text>
<text x="355.0" y="554.5" font-size="6.3" text-anchor="middle" fill="#111" stroke="#111" stroke-width="0.3">S-7</text>
<text x="355.0" y="592.5" font-size="6.3" text-anchor="middle" fill="#111" stroke="#111" stroke-width="0.3">S-7</text>
<text x="411.0" y="607.5" font-size="6.3" text-anchor="middle" fill="#111" stroke="#111" stroke-width="0.3">V-44</text>
<text x="478.0" y="597.5" font-size="6.3" text-anchor="middle" fill="#111" stroke="#111" stroke-width="0.3">V-45</text>
<text x="433.0" y="642.5" font-size="6.3" text-anchor="middle" fill="#111" stroke="#111" stroke-width="0.3">V-47</text>
<text x="528.0" y="636.5" font-size="6.3" text-anchor="middle" fill="#111" stroke="#111" stroke-width="0.3">V-48</text>
<text x="547.0" y="583.5" font-size="6.3" text-anchor="middle" fill="#111" stroke="#111" stroke-width="0.3">V-49</text>
<text x="763.0" y="648.5" font-size="6.3" text-anchor="middle" fill="#111" stroke="#111" stroke-width="0.3">P-39</text>
<text x="831.0" y="651.5" font-size="6.3" text-anchor="middle" fill="#111" stroke="#111" stroke-width="0.3">V-26</text>
<text x="955.0" y="552.5" font-size="6.3" text-anchor="middle" fill="#111" stroke="#111" stroke-width="0.3">P-43</text>
<text x="1043.0" y="575.5" font-size="6.3" text-anchor="middle" fill="#111" stroke="#111" stroke-width="0.3">V-37</text>
<text x="955.0" y="593.5" font-size="6.3" text-anchor="middle" fill="#111" stroke="#111" stroke-width="0.3">P-42</text>
<text x="1043.0" y="613.5" font-size="6.3" text-anchor="middle" fill="#111" stroke="#111" stroke-width="0.3">V-37</text>
<text x="163.0" y="606.5" font-size="6.3" text-anchor="middle" fill="#111" stroke="#111" stroke-width="0.3">V-44</text>
<text x="205.0" y="328.0" font-size="9.3" text-anchor="middle" fill="#111" stroke="#111" stroke-width="0.35">E-4</text>
<text x="347.0" y="327.0" font-size="9.3" text-anchor="middle" fill="#111" stroke="#111" stroke-width="0.35">E-1</text>
<text x="653.0" y="262.0" font-size="9.3" text-anchor="middle" fill="#111" stroke="#111" stroke-width="0.35">E-7</text>
<text x="204.0" y="480.0" font-size="9.3" text-anchor="middle" fill="#111" stroke="#111" stroke-width="0.35">E-5</text>
<text x="348.0" y="480.0" font-size="9.3" text-anchor="middle" fill="#111" stroke="#111" stroke-width="0.35">E-2</text>
<text x="654.4" y="413.0" font-size="9.3" text-anchor="middle" fill="#111" stroke="#111" stroke-width="0.35">E-8</text>
<text x="205.0" y="659.0" font-size="9.3" text-anchor="middle" fill="#111" stroke="#111" stroke-width="0.35">E-6</text>
<text x="348.0" y="659.0" font-size="9.3" text-anchor="middle" fill="#111" stroke="#111" stroke-width="0.35">E-3</text>
<text x="655.0" y="618.0" font-size="9.3" text-anchor="middle" fill="#111" stroke="#111" stroke-width="0.35">E-9</text></g></svg>
<!--/DIAG-->
<div id="rightbar" class="a"><div class="a" style="left:4.5px;top:57px;width:7.5px;height:352px;border-radius:4px;background:#747476"></div></div>
<div id="bottombar" class="a">
  <div class="a" style="left:1px;top:3px;width:87px;height:14px;background:#47474a;border:1px solid #565658;border-bottom:none"></div>
  <div class="a" style="left:5px;top:3px;font-size:10.5px;color:#eeeeee;line-height:14px">Custom 65%</div>
  <svg class="a" style="left:73px;top:4px" width="10" height="12"><path d="M2 4.5l3-3 3 3M2 7.5l3 3 3-3" fill="none" stroke="#ccc" stroke-width="1"/></svg>
  <div class="a" style="left:227px;top:5.5px;width:708px;height:7.5px;border-radius:4px;background:#7a7a7c"></div>
  <div class="a" style="left:0;top:15px;width:1061px;height:2px;background:#4a4a4c"></div>
  <div class="a" style="left:1005px;top:3px;width:27px;height:13px;background:#2c2c2e;border:1px solid #4a4a4a"></div>
  <svg class="a" style="left:1006px;top:4px" width="26" height="12"><path d="M6.5 1l-3 3M6.5 1l3 3M6.5 11l-3-3M6.5 11l3-3M1 6l2.5-2.5M1 6l2.5 2.5M12 6l-2.5-2.5M12 6l-2.5 2.5" stroke="#3a86f0" stroke-width="1.3"/><rect x="4.5" y="4" width="4" height="4" fill="#cfe6ff"/><circle cx="19.5" cy="6" r="4.5" fill="#9aa6b8" stroke="#d0d8e8" stroke-width="1"/><rect x="18" y="3.5" width="3" height="5" fill="#fff"/></svg>
</div>
<div id="status" class="a">
  <div class="a" style="left:13px;top:0px">Ready</div>
  <div class="a" style="left:500px;top:0px;letter-spacing:-0.1px">M: [ 281.78, 194.77 ]</div>
</div>
<div class="a pop">
  <div class="a plbl" style="left:0px;top:11px;width:47px">Name:</div>
  <div class="a field" style="left:55px;top:8px;width:298px;height:19px"></div>
  <div class="a" style="left:58px;top:11px;font-size:12.5px;color:#fafafa">ProcEng.vsd</div>
  <div class="a plbl" style="left:0px;top:35px;width:47px">Tags:</div>
  <div class="a field" style="left:55px;top:32px;width:298px;height:20px"></div>
  <div class="a plbl" style="left:0px;top:60px;width:47px">Where:</div>
  <div class="a" style="left:56px;top:57px;width:231px;height:18px;background:#555557;border-radius:4px"></div>
  <svg class="a" style="left:63px;top:61px" width="15" height="12"><path d="M0.5 1.5h5l1.5 1.5h7.5v8.5h-14z" fill="#6db0e0"/><path d="M0.5 4h14v7.5h-14z" fill="#8fc8ef"/></svg>
  <div class="a" style="left:82px;top:60px;font-size:12.5px;color:#f2f2f2">My ConceptDraw</div>
  <div class="a" style="left:273px;top:57px;width:14px;height:18px;background:#2f6fe0;border-radius:0 4px 4px 0"></div>
  <svg class="a" style="left:273px;top:57px" width="14" height="18"><path d="M4 7l3-3 3 3M4 11l3 3 3-3" fill="none" stroke="#fff" stroke-width="1.3"/></svg>
  <div class="a" style="left:295px;top:59px;width:13px;height:14px;background:#4a4a4c;border:1px solid #5a5a5c;border-radius:3px"></div>
  <div class="a" style="left:312px;top:60px;font-size:12.5px;color:#f2f2f2">Locked</div>
</div>
<svg class="a" style="left:651px;top:17px" width="30" height="14"><path d="M0 13 Q4 13 7 10 L12.5 3 Q14.5 1 16.5 3 L22 10 Q25 13 29 13" fill="#2a2a2b" stroke="#505052" stroke-width="1"/><rect x="3" y="12.5" width="24" height="3" fill="#2a2a2b"/></svg>
</body></html>
